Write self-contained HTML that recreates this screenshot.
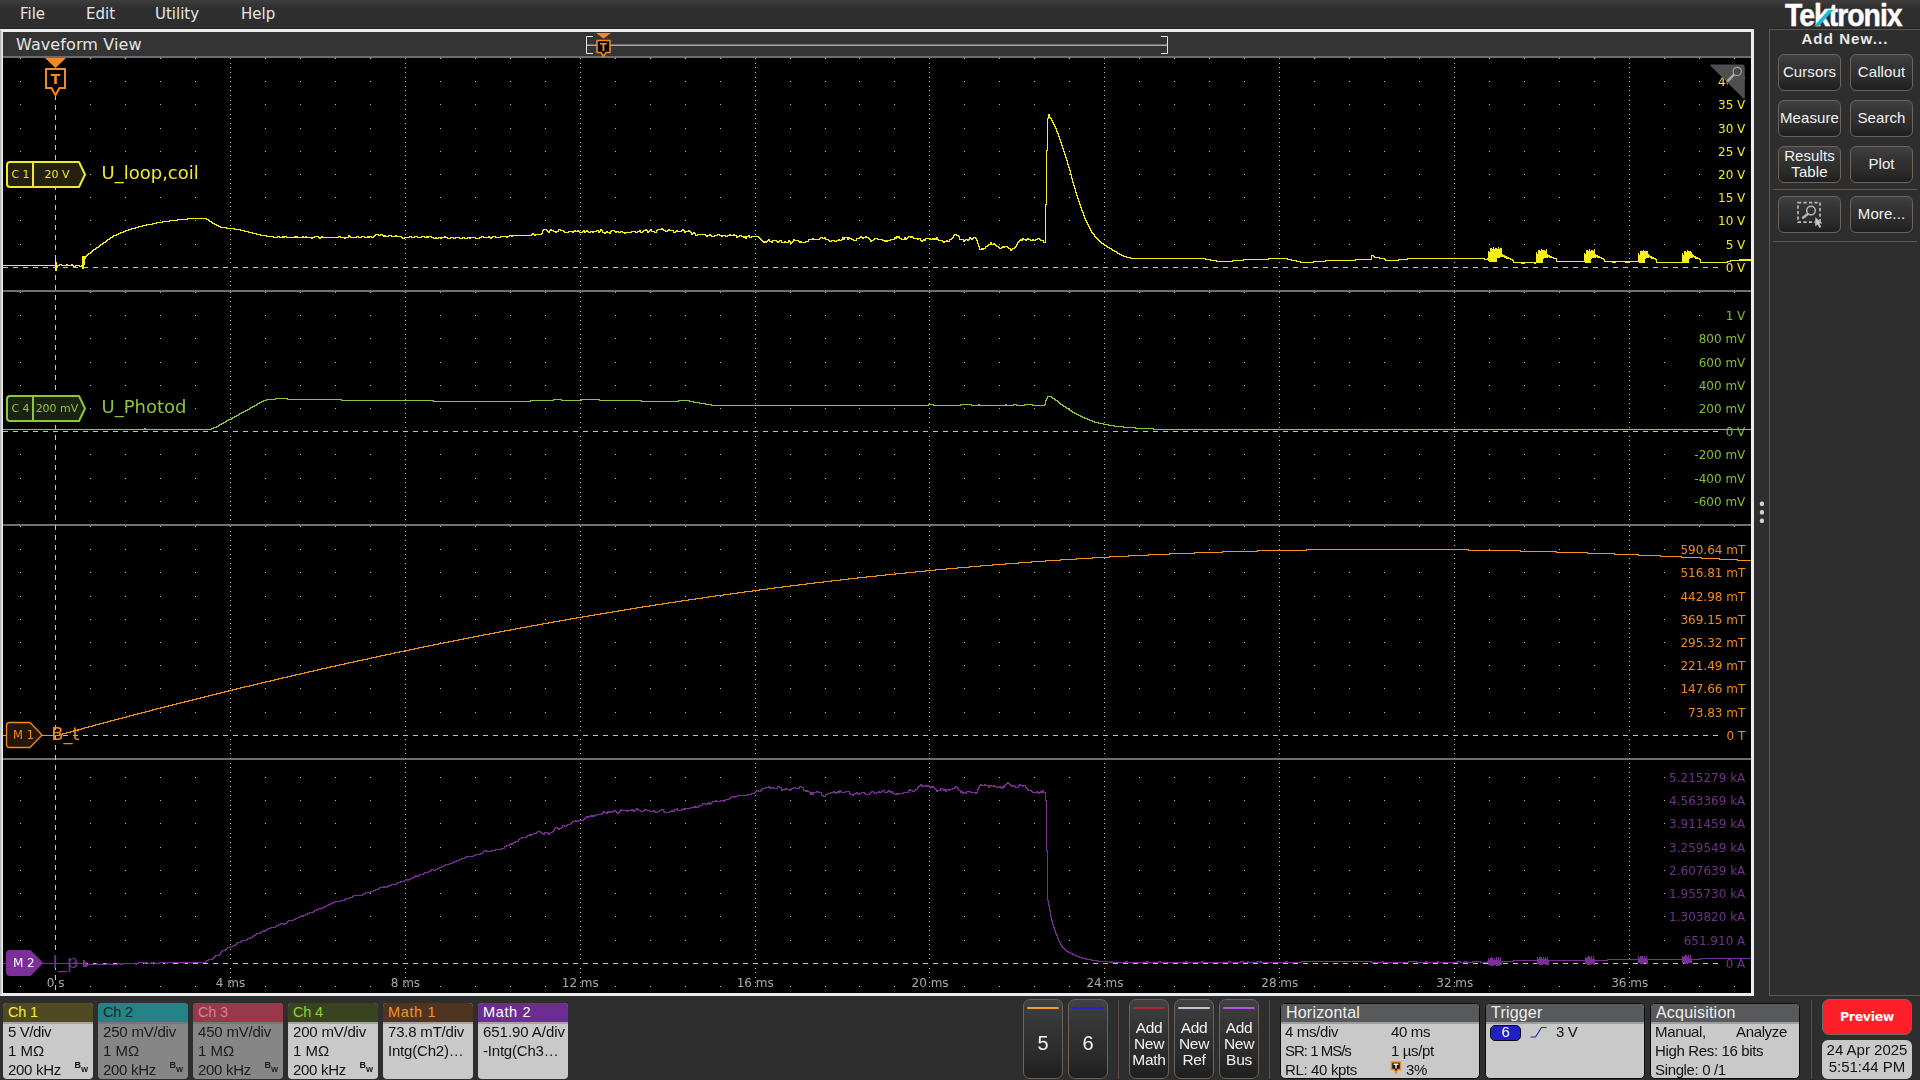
<!DOCTYPE html><html lang="en"><head><meta charset="utf-8"><title>Waveform View</title><style>
*{box-sizing:border-box;margin:0;padding:0}
html,body{width:1920px;height:1080px;overflow:hidden;background:#2e2e2e}
body{position:relative;font-family:"Liberation Sans",sans-serif;color:#e8e8e8;-webkit-font-smoothing:antialiased}
.abs{position:absolute}
.dv{font-family:"DejaVu Sans","Liberation Sans",sans-serif}
#menu span{position:absolute;top:4px;font:15px/20px "DejaVu Sans","Liberation Sans",sans-serif;color:#e6e6e6;white-space:nowrap}
#frame{position:absolute;left:0;top:29px;width:1754px;height:967px;background:#000;border:3px solid #ebecee;border-left-color:#d0d0d2}
#title{position:absolute;left:3px;top:32px;width:1748px;height:24px;background:#343434}
#titleline{position:absolute;left:3px;top:56px;width:1748px;height:2px;background:#6b6d70}
#title span{position:absolute;left:13px;top:2px;font:16px/22px "DejaVu Sans","Liberation Sans",sans-serif;letter-spacing:.1px;color:#e4e4e4;white-space:nowrap}
svg{position:absolute;left:0;top:0;will-change:transform}
svg text{font-family:"DejaVu Sans","Liberation Sans",sans-serif}
.btn{position:absolute;border:1px solid #6a625b;border-radius:6px;background:linear-gradient(#414143 0%,#353536 30%,#2b2b2b 70%,#1f1f1f 100%);color:#f2f2f2;text-align:center;white-space:nowrap}
.rb{width:63px;height:37px;font:15px/34px "Liberation Sans",sans-serif;letter-spacing:.1px}
.sep{position:absolute;height:1px;background:#5f5852}
.vsep{position:absolute;width:1px;background:#5a5049;top:1000px;height:79px}
.badge{position:absolute;top:1003px;width:90px;height:76px;border-radius:4px;overflow:hidden;background:#c9c9c9;color:#111;font:15px/19px "Liberation Sans",sans-serif;letter-spacing:-.4px;white-space:nowrap}
.badge .hd{position:absolute;left:0;top:0;width:100%;height:19px;font:14.5px/18px "Liberation Sans",sans-serif;letter-spacing:-.2px;padding-left:5px}
.badge .ln{position:absolute;left:0;top:19px;width:100%;height:1.6px;background:#a4a4a4}
.badge p{position:absolute;left:5px}
.badge.off{background:#868686;color:#1c1c1c}
.badge.off .ln{background:#777}
.bw{position:absolute;left:71.5px;top:57px;font:bold 9px/10px "Liberation Sans",sans-serif;letter-spacing:0}
.bw sub{font-size:7.5px;vertical-align:-3.5px}
.box{position:absolute;top:1003px;height:76px;border:1px solid #0c0c0c;border-radius:5px;overflow:hidden;background:#c9c9c9;color:#111;font:15px/19px "Liberation Sans",sans-serif;letter-spacing:-.35px;white-space:nowrap}
.box .hd{position:absolute;left:0;top:0;width:100%;height:20px;border-bottom:2px solid #9d9d9d;background:#58595b;color:#f0f0f0;font:16px/18px "Liberation Sans",sans-serif;letter-spacing:.2px;padding-left:5px}
.box p{position:absolute}
.tall{top:999px;height:80px;width:40px;border-radius:7px}
.tall i{position:absolute;left:3px;top:6.6px;width:32px;height:2.6px;border-radius:1px}
.tall b{position:absolute;left:0;width:100%;font-weight:normal}
</style></head><body><div class="abs" style="left:0;top:0;width:1920px;height:29px;background:linear-gradient(#3d3d3d,#2e2e2e 9px)"></div><div class="abs" style="left:0;top:28px;width:1755px;height:1px;background:#242424"></div><div class="abs" style="left:1769px;top:28px;width:151px;height:1px;background:#262626"></div><div id="menu"><span style="left:20px">File</span><span style="left:86px">Edit</span><span style="left:155px">Utility</span><span style="left:241px">Help</span></div><div class="abs" id="logo" style="left:1785px;top:-3px;-webkit-text-stroke:.5px #fff;font:bold 31.5px/36px 'Liberation Sans',sans-serif;color:#fff;letter-spacing:-1.1px;white-space:nowrap;transform:scaleX(.9);transform-origin:0 0">Tektronix</div><div class="abs" style="left:1820.5px;top:9.5px;width:5.4px;height:16.4px;background:#1fb9da;transform:skewX(-42deg)"></div><div id="frame"></div><div class="abs" style="left:0;top:31px;width:3px;height:963px;background:linear-gradient(90deg,#a9a9ad,#d6d6d9 50%,#f3f4f6)"></div><div id="title"><span>Waveform View</span></div><div id="titleline"></div><div class="abs" style="left:1769px;top:29px;width:160px;height:967px;border:1px solid #5f5852;border-left-color:#58595b;background:#2e2e2e"></div><div class="abs" style="left:1770px;top:30px;width:150px;text-align:center;font:bold 15px/18px 'Liberation Sans',sans-serif;letter-spacing:1.1px;color:#e9e9ec">Add New...</div><div class="btn rb" style="left:1778px;top:54px">Cursors</div><div class="btn rb" style="left:1850px;top:54px">Callout</div><div class="btn rb" style="left:1778px;top:100px">Measure</div><div class="btn rb" style="left:1850px;top:100px">Search</div><div class="btn rb" style="left:1850px;top:146px">Plot</div><div class="btn rb" style="left:1850px;top:196px">More...</div><div class="btn rb" style="left:1778px;top:146px;line-height:16px;padding-top:1px">Results<br>Table</div><div class="btn rb" style="left:1778px;top:196px"></div><div class="sep" style="left:1773px;top:189px;width:144px"></div><div class="sep" style="left:1773px;top:241px;width:144px"></div><svg width="1920" height="1080" viewBox="0 0 1920 1080" style="pointer-events:none"><rect x="1798" y="202.6" width="22" height="19.6" fill="none" stroke="#b9b9b9" stroke-width="1.7" stroke-dasharray="3.2 2.3"/><circle cx="1811" cy="210.6" r="4.3" fill="none" stroke="#b5b5b5" stroke-width="1.5"/><path d="M1807.8 214L1803 217.8" stroke="#b5b5b5" stroke-width="2.4" stroke-linecap="round"/><path d="M1815.3 217.2L1815.3 226.4L1817.6 224.4L1819.5 228L1821.2 227.1L1819.4 223.6L1822.6 223.5Z" fill="#c4c4c4"/></svg><div class="badge" style="left:3px"><div class="hd" style="background:#4f4a22;color:#f6f034">Ch 1</div><div class="ln"></div><p style="top:19px;letter-spacing:-0.4px">5 V/div</p><p style="top:38px;letter-spacing:0px">1 M&#937;</p><p style="top:57px;letter-spacing:-0.3px">200 kHz</p><span class="bw">B<sub>W</sub></span></div><div class="badge off" style="left:98px"><div class="hd" style="background:#248386;color:#0f2a2d">Ch 2</div><div class="ln"></div><p style="top:19px;letter-spacing:-0.2px">250 mV/div</p><p style="top:38px;letter-spacing:0px">1 M&#937;</p><p style="top:57px;letter-spacing:-0.3px">200 kHz</p><span class="bw">B<sub>W</sub></span></div><div class="badge off" style="left:193px"><div class="hd" style="background:#98394a;color:#cf8593">Ch 3</div><div class="ln"></div><p style="top:19px;letter-spacing:-0.2px">450 mV/div</p><p style="top:38px;letter-spacing:0px">1 M&#937;</p><p style="top:57px;letter-spacing:-0.3px">200 kHz</p><span class="bw">B<sub>W</sub></span></div><div class="badge" style="left:288px"><div class="hd" style="background:#38441f;color:#8fd030">Ch 4</div><div class="ln"></div><p style="top:19px;letter-spacing:-0.2px">200 mV/div</p><p style="top:38px;letter-spacing:0px">1 M&#937;</p><p style="top:57px;letter-spacing:-0.3px">200 kHz</p><span class="bw">B<sub>W</sub></span></div><div class="badge" style="left:383px"><div class="hd" style="background:#4f351f;color:#f59325;letter-spacing:.65px">Math 1</div><div class="ln"></div><p style="top:19px;letter-spacing:-0.2px">73.8 mT/div</p><p style="top:38px;letter-spacing:-0.2px">Intg(Ch2)&#8230;</p></div><div class="badge" style="left:478px"><div class="hd" style="background:#6c2d91;color:#ffffff;letter-spacing:.65px">Math 2</div><div class="ln"></div><p style="top:19px;letter-spacing:-0.05px">651.90 A/div</p><p style="top:38px;letter-spacing:-0.2px">-Intg(Ch3&#8230;</p></div><div class="btn tall" style="left:1023px"><i style="background:#f59a2a"></i><b style="top:30px;font:20px/26px 'Liberation Sans',sans-serif">5</b></div><div class="btn tall" style="left:1068px"><i style="background:#2424c8"></i><b style="top:30px;font:20px/26px 'Liberation Sans',sans-serif">6</b></div><div class="btn tall" style="left:1129px"><i style="background:#ae2433"></i><b style="top:20px;font:15.5px/16px 'Liberation Sans',sans-serif;letter-spacing:-.3px">Add<br>New<br>Math</b></div><div class="btn tall" style="left:1174px"><i style="background:#c3c3d2"></i><b style="top:20px;font:15.5px/16px 'Liberation Sans',sans-serif;letter-spacing:-.3px">Add<br>New<br>Ref</b></div><div class="btn tall" style="left:1219px"><i style="background:#b255e4"></i><b style="top:20px;font:15.5px/16px 'Liberation Sans',sans-serif;letter-spacing:-.3px">Add<br>New<br>Bus</b></div><div class="vsep" style="left:1118px"></div><div class="vsep" style="left:1269px"></div><div class="vsep" style="left:1811px"></div><div class="box" style="left:1280px;width:200px"><div class="hd">Horizontal</div><p style="left:4px;top:17.8px">4 ms/div</p><p style="left:110px;top:17.8px">40 ms</p><p style="left:4px;top:36.8px;letter-spacing:-1px">SR: 1 MS/s</p><p style="left:110px;top:36.8px">1 &#181;s/pt</p><p style="left:4px;top:56.2px">RL: 40 kpts</p><p style="left:125px;top:56.2px">3%</p><svg width="12" height="14" viewBox="0 0 12 14" style="left:109px;top:57px"><path d="M1.5 1H10.5V8.5H7.8L6 12L4.2 8.5H1.5Z" fill="#111" stroke="#f08a24" stroke-width="1.6"/><path d="M3.6 3.2H8.4M6 3.2V7.4" stroke="#fff" stroke-width="1.4"/></svg></div><div class="box" style="left:1485px;width:160px"><div class="hd">Trigger</div><div class="abs" style="left:4px;top:21px;width:31px;height:16px;border:1px solid #0a0a0a;border-radius:5px;background:#2121c2;color:#fff;text-align:center;font:15px/12px 'Liberation Sans',sans-serif">6</div><svg width="20" height="14" viewBox="0 0 20 14" style="left:44px;top:22px"><path d="M0.5 11H5.5L11.5 1.5H16.5" fill="none" stroke="#2a2aa8" stroke-width="1.2"/></svg><p style="left:70px;top:17.8px">3 V</p></div><div class="box" style="left:1650px;width:150px"><div class="hd">Acquisition</div><p style="left:4px;top:17.8px">Manual,</p><p style="left:85px;top:17.8px">Analyze</p><p style="left:4px;top:36.8px">High Res: 16 bits</p><p style="left:4px;top:56.2px">Single: 0 /1</p></div><div class="abs" style="left:1822px;top:999px;width:90px;height:36px;border:1px solid #6b6b6b;border-radius:7px;background:#ff1f28;color:#fff;text-align:center;font:bold 12.5px/33px 'DejaVu Sans','Liberation Sans',sans-serif;letter-spacing:-.3px">Preview</div><div class="abs" style="left:1822px;top:1040px;width:90px;height:39px;border-radius:6px;background:#c9c9c9;color:#111;text-align:center;font:15px/17px 'Liberation Sans',sans-serif;padding-top:1px;white-space:nowrap">24 Apr 2025<br>5:51:44 PM</div><svg width="1920" height="1080" viewBox="0 0 1920 1080"><path d="M20 58.5h1M90 58.5h1M125 58.5h1M160 58.5h1M195 58.5h1M230 58.5h1M265 58.5h1M300 58.5h1M335 58.5h1M370 58.5h1M405 58.5h1M440 58.5h1M475 58.5h1M510 58.5h1M545 58.5h1M580 58.5h1M615 58.5h1M650 58.5h1M685 58.5h1M720 58.5h1M755 58.5h1M790 58.5h1M825 58.5h1M859 58.5h1M894 58.5h1M929 58.5h1M964 58.5h1M999 58.5h1M1034 58.5h1M1069 58.5h1M1104 58.5h1M1139 58.5h1M1174 58.5h1M1209 58.5h1M1244 58.5h1M1279 58.5h1M1314 58.5h1M1349 58.5h1M1384 58.5h1M1419 58.5h1M1454 58.5h1M1489 58.5h1M1524 58.5h1M1559 58.5h1M1594 58.5h1M1629 58.5h1M1664 58.5h1M1699 58.5h1M1734 58.5h1M20 81.5h1M90 81.5h1M125 81.5h1M160 81.5h1M195 81.5h1M230 81.5h1M265 81.5h1M300 81.5h1M335 81.5h1M370 81.5h1M405 81.5h1M440 81.5h1M475 81.5h1M510 81.5h1M545 81.5h1M580 81.5h1M615 81.5h1M650 81.5h1M685 81.5h1M720 81.5h1M755 81.5h1M790 81.5h1M825 81.5h1M859 81.5h1M894 81.5h1M929 81.5h1M964 81.5h1M999 81.5h1M1034 81.5h1M1069 81.5h1M1104 81.5h1M1139 81.5h1M1174 81.5h1M1209 81.5h1M1244 81.5h1M1279 81.5h1M1314 81.5h1M1349 81.5h1M1384 81.5h1M1419 81.5h1M1454 81.5h1M1489 81.5h1M1524 81.5h1M1559 81.5h1M1594 81.5h1M1629 81.5h1M1664 81.5h1M1699 81.5h1M1734 81.5h1M20 104.5h1M90 104.5h1M125 104.5h1M160 104.5h1M195 104.5h1M230 104.5h1M265 104.5h1M300 104.5h1M335 104.5h1M370 104.5h1M405 104.5h1M440 104.5h1M475 104.5h1M510 104.5h1M545 104.5h1M580 104.5h1M615 104.5h1M650 104.5h1M685 104.5h1M720 104.5h1M755 104.5h1M790 104.5h1M825 104.5h1M859 104.5h1M894 104.5h1M929 104.5h1M964 104.5h1M999 104.5h1M1034 104.5h1M1069 104.5h1M1104 104.5h1M1139 104.5h1M1174 104.5h1M1209 104.5h1M1244 104.5h1M1279 104.5h1M1314 104.5h1M1349 104.5h1M1384 104.5h1M1419 104.5h1M1454 104.5h1M1489 104.5h1M1524 104.5h1M1559 104.5h1M1594 104.5h1M1629 104.5h1M1664 104.5h1M1699 104.5h1M1734 104.5h1M20 128.5h1M90 128.5h1M125 128.5h1M160 128.5h1M195 128.5h1M230 128.5h1M265 128.5h1M300 128.5h1M335 128.5h1M370 128.5h1M405 128.5h1M440 128.5h1M475 128.5h1M510 128.5h1M545 128.5h1M580 128.5h1M615 128.5h1M650 128.5h1M685 128.5h1M720 128.5h1M755 128.5h1M790 128.5h1M825 128.5h1M859 128.5h1M894 128.5h1M929 128.5h1M964 128.5h1M999 128.5h1M1034 128.5h1M1069 128.5h1M1104 128.5h1M1139 128.5h1M1174 128.5h1M1209 128.5h1M1244 128.5h1M1279 128.5h1M1314 128.5h1M1349 128.5h1M1384 128.5h1M1419 128.5h1M1454 128.5h1M1489 128.5h1M1524 128.5h1M1559 128.5h1M1594 128.5h1M1629 128.5h1M1664 128.5h1M1699 128.5h1M1734 128.5h1M20 151.5h1M90 151.5h1M125 151.5h1M160 151.5h1M195 151.5h1M230 151.5h1M265 151.5h1M300 151.5h1M335 151.5h1M370 151.5h1M405 151.5h1M440 151.5h1M475 151.5h1M510 151.5h1M545 151.5h1M580 151.5h1M615 151.5h1M650 151.5h1M685 151.5h1M720 151.5h1M755 151.5h1M790 151.5h1M825 151.5h1M859 151.5h1M894 151.5h1M929 151.5h1M964 151.5h1M999 151.5h1M1034 151.5h1M1069 151.5h1M1104 151.5h1M1139 151.5h1M1174 151.5h1M1209 151.5h1M1244 151.5h1M1279 151.5h1M1314 151.5h1M1349 151.5h1M1384 151.5h1M1419 151.5h1M1454 151.5h1M1489 151.5h1M1524 151.5h1M1559 151.5h1M1594 151.5h1M1629 151.5h1M1664 151.5h1M1699 151.5h1M1734 151.5h1M20 174.5h1M90 174.5h1M125 174.5h1M160 174.5h1M195 174.5h1M230 174.5h1M265 174.5h1M300 174.5h1M335 174.5h1M370 174.5h1M405 174.5h1M440 174.5h1M475 174.5h1M510 174.5h1M545 174.5h1M580 174.5h1M615 174.5h1M650 174.5h1M685 174.5h1M720 174.5h1M755 174.5h1M790 174.5h1M825 174.5h1M859 174.5h1M894 174.5h1M929 174.5h1M964 174.5h1M999 174.5h1M1034 174.5h1M1069 174.5h1M1104 174.5h1M1139 174.5h1M1174 174.5h1M1209 174.5h1M1244 174.5h1M1279 174.5h1M1314 174.5h1M1349 174.5h1M1384 174.5h1M1419 174.5h1M1454 174.5h1M1489 174.5h1M1524 174.5h1M1559 174.5h1M1594 174.5h1M1629 174.5h1M1664 174.5h1M1699 174.5h1M1734 174.5h1M20 197.5h1M90 197.5h1M125 197.5h1M160 197.5h1M195 197.5h1M230 197.5h1M265 197.5h1M300 197.5h1M335 197.5h1M370 197.5h1M405 197.5h1M440 197.5h1M475 197.5h1M510 197.5h1M545 197.5h1M580 197.5h1M615 197.5h1M650 197.5h1M685 197.5h1M720 197.5h1M755 197.5h1M790 197.5h1M825 197.5h1M859 197.5h1M894 197.5h1M929 197.5h1M964 197.5h1M999 197.5h1M1034 197.5h1M1069 197.5h1M1104 197.5h1M1139 197.5h1M1174 197.5h1M1209 197.5h1M1244 197.5h1M1279 197.5h1M1314 197.5h1M1349 197.5h1M1384 197.5h1M1419 197.5h1M1454 197.5h1M1489 197.5h1M1524 197.5h1M1559 197.5h1M1594 197.5h1M1629 197.5h1M1664 197.5h1M1699 197.5h1M1734 197.5h1M20 220.5h1M90 220.5h1M125 220.5h1M160 220.5h1M195 220.5h1M230 220.5h1M265 220.5h1M300 220.5h1M335 220.5h1M370 220.5h1M405 220.5h1M440 220.5h1M475 220.5h1M510 220.5h1M545 220.5h1M580 220.5h1M615 220.5h1M650 220.5h1M685 220.5h1M720 220.5h1M755 220.5h1M790 220.5h1M825 220.5h1M859 220.5h1M894 220.5h1M929 220.5h1M964 220.5h1M999 220.5h1M1034 220.5h1M1069 220.5h1M1104 220.5h1M1139 220.5h1M1174 220.5h1M1209 220.5h1M1244 220.5h1M1279 220.5h1M1314 220.5h1M1349 220.5h1M1384 220.5h1M1419 220.5h1M1454 220.5h1M1489 220.5h1M1524 220.5h1M1559 220.5h1M1594 220.5h1M1629 220.5h1M1664 220.5h1M1699 220.5h1M1734 220.5h1M20 244.5h1M90 244.5h1M125 244.5h1M160 244.5h1M195 244.5h1M230 244.5h1M265 244.5h1M300 244.5h1M335 244.5h1M370 244.5h1M405 244.5h1M440 244.5h1M475 244.5h1M510 244.5h1M545 244.5h1M580 244.5h1M615 244.5h1M650 244.5h1M685 244.5h1M720 244.5h1M755 244.5h1M790 244.5h1M825 244.5h1M859 244.5h1M894 244.5h1M929 244.5h1M964 244.5h1M999 244.5h1M1034 244.5h1M1069 244.5h1M1104 244.5h1M1139 244.5h1M1174 244.5h1M1209 244.5h1M1244 244.5h1M1279 244.5h1M1314 244.5h1M1349 244.5h1M1384 244.5h1M1419 244.5h1M1454 244.5h1M1489 244.5h1M1524 244.5h1M1559 244.5h1M1594 244.5h1M1629 244.5h1M1664 244.5h1M1699 244.5h1M1734 244.5h1M230 63.5h1M230 67.5h1M230 72.5h1M230 77.5h1M230 86.5h1M230 90.5h1M230 95.5h1M230 100.5h1M230 109.5h1M230 114.5h1M230 118.5h1M230 123.5h1M230 132.5h1M230 137.5h1M230 142.5h1M230 146.5h1M230 155.5h1M230 160.5h1M230 165.5h1M230 169.5h1M230 179.5h1M230 183.5h1M230 188.5h1M230 193.5h1M230 202.5h1M230 206.5h1M230 211.5h1M230 216.5h1M230 225.5h1M230 230.5h1M230 234.5h1M230 239.5h1M230 248.5h1M230 253.5h1M230 258.5h1M230 262.5h1M230 271.5h1M230 276.5h1M230 281.5h1M230 285.5h1M405 63.5h1M405 67.5h1M405 72.5h1M405 77.5h1M405 86.5h1M405 90.5h1M405 95.5h1M405 100.5h1M405 109.5h1M405 114.5h1M405 118.5h1M405 123.5h1M405 132.5h1M405 137.5h1M405 142.5h1M405 146.5h1M405 155.5h1M405 160.5h1M405 165.5h1M405 169.5h1M405 179.5h1M405 183.5h1M405 188.5h1M405 193.5h1M405 202.5h1M405 206.5h1M405 211.5h1M405 216.5h1M405 225.5h1M405 230.5h1M405 234.5h1M405 239.5h1M405 248.5h1M405 253.5h1M405 258.5h1M405 262.5h1M405 271.5h1M405 276.5h1M405 281.5h1M405 285.5h1M580 63.5h1M580 67.5h1M580 72.5h1M580 77.5h1M580 86.5h1M580 90.5h1M580 95.5h1M580 100.5h1M580 109.5h1M580 114.5h1M580 118.5h1M580 123.5h1M580 132.5h1M580 137.5h1M580 142.5h1M580 146.5h1M580 155.5h1M580 160.5h1M580 165.5h1M580 169.5h1M580 179.5h1M580 183.5h1M580 188.5h1M580 193.5h1M580 202.5h1M580 206.5h1M580 211.5h1M580 216.5h1M580 225.5h1M580 230.5h1M580 234.5h1M580 239.5h1M580 248.5h1M580 253.5h1M580 258.5h1M580 262.5h1M580 271.5h1M580 276.5h1M580 281.5h1M580 285.5h1M755 63.5h1M755 67.5h1M755 72.5h1M755 77.5h1M755 86.5h1M755 90.5h1M755 95.5h1M755 100.5h1M755 109.5h1M755 114.5h1M755 118.5h1M755 123.5h1M755 132.5h1M755 137.5h1M755 142.5h1M755 146.5h1M755 155.5h1M755 160.5h1M755 165.5h1M755 169.5h1M755 179.5h1M755 183.5h1M755 188.5h1M755 193.5h1M755 202.5h1M755 206.5h1M755 211.5h1M755 216.5h1M755 225.5h1M755 230.5h1M755 234.5h1M755 239.5h1M755 248.5h1M755 253.5h1M755 258.5h1M755 262.5h1M755 271.5h1M755 276.5h1M755 281.5h1M755 285.5h1M929 63.5h1M929 67.5h1M929 72.5h1M929 77.5h1M929 86.5h1M929 90.5h1M929 95.5h1M929 100.5h1M929 109.5h1M929 114.5h1M929 118.5h1M929 123.5h1M929 132.5h1M929 137.5h1M929 142.5h1M929 146.5h1M929 155.5h1M929 160.5h1M929 165.5h1M929 169.5h1M929 179.5h1M929 183.5h1M929 188.5h1M929 193.5h1M929 202.5h1M929 206.5h1M929 211.5h1M929 216.5h1M929 225.5h1M929 230.5h1M929 234.5h1M929 239.5h1M929 248.5h1M929 253.5h1M929 258.5h1M929 262.5h1M929 271.5h1M929 276.5h1M929 281.5h1M929 285.5h1M1104 63.5h1M1104 67.5h1M1104 72.5h1M1104 77.5h1M1104 86.5h1M1104 90.5h1M1104 95.5h1M1104 100.5h1M1104 109.5h1M1104 114.5h1M1104 118.5h1M1104 123.5h1M1104 132.5h1M1104 137.5h1M1104 142.5h1M1104 146.5h1M1104 155.5h1M1104 160.5h1M1104 165.5h1M1104 169.5h1M1104 179.5h1M1104 183.5h1M1104 188.5h1M1104 193.5h1M1104 202.5h1M1104 206.5h1M1104 211.5h1M1104 216.5h1M1104 225.5h1M1104 230.5h1M1104 234.5h1M1104 239.5h1M1104 248.5h1M1104 253.5h1M1104 258.5h1M1104 262.5h1M1104 271.5h1M1104 276.5h1M1104 281.5h1M1104 285.5h1M1279 63.5h1M1279 67.5h1M1279 72.5h1M1279 77.5h1M1279 86.5h1M1279 90.5h1M1279 95.5h1M1279 100.5h1M1279 109.5h1M1279 114.5h1M1279 118.5h1M1279 123.5h1M1279 132.5h1M1279 137.5h1M1279 142.5h1M1279 146.5h1M1279 155.5h1M1279 160.5h1M1279 165.5h1M1279 169.5h1M1279 179.5h1M1279 183.5h1M1279 188.5h1M1279 193.5h1M1279 202.5h1M1279 206.5h1M1279 211.5h1M1279 216.5h1M1279 225.5h1M1279 230.5h1M1279 234.5h1M1279 239.5h1M1279 248.5h1M1279 253.5h1M1279 258.5h1M1279 262.5h1M1279 271.5h1M1279 276.5h1M1279 281.5h1M1279 285.5h1M1454 63.5h1M1454 67.5h1M1454 72.5h1M1454 77.5h1M1454 86.5h1M1454 90.5h1M1454 95.5h1M1454 100.5h1M1454 109.5h1M1454 114.5h1M1454 118.5h1M1454 123.5h1M1454 132.5h1M1454 137.5h1M1454 142.5h1M1454 146.5h1M1454 155.5h1M1454 160.5h1M1454 165.5h1M1454 169.5h1M1454 179.5h1M1454 183.5h1M1454 188.5h1M1454 193.5h1M1454 202.5h1M1454 206.5h1M1454 211.5h1M1454 216.5h1M1454 225.5h1M1454 230.5h1M1454 234.5h1M1454 239.5h1M1454 248.5h1M1454 253.5h1M1454 258.5h1M1454 262.5h1M1454 271.5h1M1454 276.5h1M1454 281.5h1M1454 285.5h1M1629 63.5h1M1629 67.5h1M1629 72.5h1M1629 77.5h1M1629 86.5h1M1629 90.5h1M1629 95.5h1M1629 100.5h1M1629 109.5h1M1629 114.5h1M1629 118.5h1M1629 123.5h1M1629 132.5h1M1629 137.5h1M1629 142.5h1M1629 146.5h1M1629 155.5h1M1629 160.5h1M1629 165.5h1M1629 169.5h1M1629 179.5h1M1629 183.5h1M1629 188.5h1M1629 193.5h1M1629 202.5h1M1629 206.5h1M1629 211.5h1M1629 216.5h1M1629 225.5h1M1629 230.5h1M1629 234.5h1M1629 239.5h1M1629 248.5h1M1629 253.5h1M1629 258.5h1M1629 262.5h1M1629 271.5h1M1629 276.5h1M1629 281.5h1M1629 285.5h1M20 292.5h1M90 292.5h1M125 292.5h1M160 292.5h1M195 292.5h1M230 292.5h1M265 292.5h1M300 292.5h1M335 292.5h1M370 292.5h1M405 292.5h1M440 292.5h1M475 292.5h1M510 292.5h1M545 292.5h1M580 292.5h1M615 292.5h1M650 292.5h1M685 292.5h1M720 292.5h1M755 292.5h1M790 292.5h1M825 292.5h1M859 292.5h1M894 292.5h1M929 292.5h1M964 292.5h1M999 292.5h1M1034 292.5h1M1069 292.5h1M1104 292.5h1M1139 292.5h1M1174 292.5h1M1209 292.5h1M1244 292.5h1M1279 292.5h1M1314 292.5h1M1349 292.5h1M1384 292.5h1M1419 292.5h1M1454 292.5h1M1489 292.5h1M1524 292.5h1M1559 292.5h1M1594 292.5h1M1629 292.5h1M1664 292.5h1M1699 292.5h1M1734 292.5h1M20 315.5h1M90 315.5h1M125 315.5h1M160 315.5h1M195 315.5h1M230 315.5h1M265 315.5h1M300 315.5h1M335 315.5h1M370 315.5h1M405 315.5h1M440 315.5h1M475 315.5h1M510 315.5h1M545 315.5h1M580 315.5h1M615 315.5h1M650 315.5h1M685 315.5h1M720 315.5h1M755 315.5h1M790 315.5h1M825 315.5h1M859 315.5h1M894 315.5h1M929 315.5h1M964 315.5h1M999 315.5h1M1034 315.5h1M1069 315.5h1M1104 315.5h1M1139 315.5h1M1174 315.5h1M1209 315.5h1M1244 315.5h1M1279 315.5h1M1314 315.5h1M1349 315.5h1M1384 315.5h1M1419 315.5h1M1454 315.5h1M1489 315.5h1M1524 315.5h1M1559 315.5h1M1594 315.5h1M1629 315.5h1M1664 315.5h1M1699 315.5h1M1734 315.5h1M20 338.5h1M90 338.5h1M125 338.5h1M160 338.5h1M195 338.5h1M230 338.5h1M265 338.5h1M300 338.5h1M335 338.5h1M370 338.5h1M405 338.5h1M440 338.5h1M475 338.5h1M510 338.5h1M545 338.5h1M580 338.5h1M615 338.5h1M650 338.5h1M685 338.5h1M720 338.5h1M755 338.5h1M790 338.5h1M825 338.5h1M859 338.5h1M894 338.5h1M929 338.5h1M964 338.5h1M999 338.5h1M1034 338.5h1M1069 338.5h1M1104 338.5h1M1139 338.5h1M1174 338.5h1M1209 338.5h1M1244 338.5h1M1279 338.5h1M1314 338.5h1M1349 338.5h1M1384 338.5h1M1419 338.5h1M1454 338.5h1M1489 338.5h1M1524 338.5h1M1559 338.5h1M1594 338.5h1M1629 338.5h1M1664 338.5h1M1699 338.5h1M1734 338.5h1M20 362.5h1M90 362.5h1M125 362.5h1M160 362.5h1M195 362.5h1M230 362.5h1M265 362.5h1M300 362.5h1M335 362.5h1M370 362.5h1M405 362.5h1M440 362.5h1M475 362.5h1M510 362.5h1M545 362.5h1M580 362.5h1M615 362.5h1M650 362.5h1M685 362.5h1M720 362.5h1M755 362.5h1M790 362.5h1M825 362.5h1M859 362.5h1M894 362.5h1M929 362.5h1M964 362.5h1M999 362.5h1M1034 362.5h1M1069 362.5h1M1104 362.5h1M1139 362.5h1M1174 362.5h1M1209 362.5h1M1244 362.5h1M1279 362.5h1M1314 362.5h1M1349 362.5h1M1384 362.5h1M1419 362.5h1M1454 362.5h1M1489 362.5h1M1524 362.5h1M1559 362.5h1M1594 362.5h1M1629 362.5h1M1664 362.5h1M1699 362.5h1M1734 362.5h1M20 385.5h1M90 385.5h1M125 385.5h1M160 385.5h1M195 385.5h1M230 385.5h1M265 385.5h1M300 385.5h1M335 385.5h1M370 385.5h1M405 385.5h1M440 385.5h1M475 385.5h1M510 385.5h1M545 385.5h1M580 385.5h1M615 385.5h1M650 385.5h1M685 385.5h1M720 385.5h1M755 385.5h1M790 385.5h1M825 385.5h1M859 385.5h1M894 385.5h1M929 385.5h1M964 385.5h1M999 385.5h1M1034 385.5h1M1069 385.5h1M1104 385.5h1M1139 385.5h1M1174 385.5h1M1209 385.5h1M1244 385.5h1M1279 385.5h1M1314 385.5h1M1349 385.5h1M1384 385.5h1M1419 385.5h1M1454 385.5h1M1489 385.5h1M1524 385.5h1M1559 385.5h1M1594 385.5h1M1629 385.5h1M1664 385.5h1M1699 385.5h1M1734 385.5h1M20 408.5h1M90 408.5h1M125 408.5h1M160 408.5h1M195 408.5h1M230 408.5h1M265 408.5h1M300 408.5h1M335 408.5h1M370 408.5h1M405 408.5h1M440 408.5h1M475 408.5h1M510 408.5h1M545 408.5h1M580 408.5h1M615 408.5h1M650 408.5h1M685 408.5h1M720 408.5h1M755 408.5h1M790 408.5h1M825 408.5h1M859 408.5h1M894 408.5h1M929 408.5h1M964 408.5h1M999 408.5h1M1034 408.5h1M1069 408.5h1M1104 408.5h1M1139 408.5h1M1174 408.5h1M1209 408.5h1M1244 408.5h1M1279 408.5h1M1314 408.5h1M1349 408.5h1M1384 408.5h1M1419 408.5h1M1454 408.5h1M1489 408.5h1M1524 408.5h1M1559 408.5h1M1594 408.5h1M1629 408.5h1M1664 408.5h1M1699 408.5h1M1734 408.5h1M20 454.5h1M90 454.5h1M125 454.5h1M160 454.5h1M195 454.5h1M230 454.5h1M265 454.5h1M300 454.5h1M335 454.5h1M370 454.5h1M405 454.5h1M440 454.5h1M475 454.5h1M510 454.5h1M545 454.5h1M580 454.5h1M615 454.5h1M650 454.5h1M685 454.5h1M720 454.5h1M755 454.5h1M790 454.5h1M825 454.5h1M859 454.5h1M894 454.5h1M929 454.5h1M964 454.5h1M999 454.5h1M1034 454.5h1M1069 454.5h1M1104 454.5h1M1139 454.5h1M1174 454.5h1M1209 454.5h1M1244 454.5h1M1279 454.5h1M1314 454.5h1M1349 454.5h1M1384 454.5h1M1419 454.5h1M1454 454.5h1M1489 454.5h1M1524 454.5h1M1559 454.5h1M1594 454.5h1M1629 454.5h1M1664 454.5h1M1699 454.5h1M1734 454.5h1M20 478.5h1M90 478.5h1M125 478.5h1M160 478.5h1M195 478.5h1M230 478.5h1M265 478.5h1M300 478.5h1M335 478.5h1M370 478.5h1M405 478.5h1M440 478.5h1M475 478.5h1M510 478.5h1M545 478.5h1M580 478.5h1M615 478.5h1M650 478.5h1M685 478.5h1M720 478.5h1M755 478.5h1M790 478.5h1M825 478.5h1M859 478.5h1M894 478.5h1M929 478.5h1M964 478.5h1M999 478.5h1M1034 478.5h1M1069 478.5h1M1104 478.5h1M1139 478.5h1M1174 478.5h1M1209 478.5h1M1244 478.5h1M1279 478.5h1M1314 478.5h1M1349 478.5h1M1384 478.5h1M1419 478.5h1M1454 478.5h1M1489 478.5h1M1524 478.5h1M1559 478.5h1M1594 478.5h1M1629 478.5h1M1664 478.5h1M1699 478.5h1M1734 478.5h1M20 501.5h1M90 501.5h1M125 501.5h1M160 501.5h1M195 501.5h1M230 501.5h1M265 501.5h1M300 501.5h1M335 501.5h1M370 501.5h1M405 501.5h1M440 501.5h1M475 501.5h1M510 501.5h1M545 501.5h1M580 501.5h1M615 501.5h1M650 501.5h1M685 501.5h1M720 501.5h1M755 501.5h1M790 501.5h1M825 501.5h1M859 501.5h1M894 501.5h1M929 501.5h1M964 501.5h1M999 501.5h1M1034 501.5h1M1069 501.5h1M1104 501.5h1M1139 501.5h1M1174 501.5h1M1209 501.5h1M1244 501.5h1M1279 501.5h1M1314 501.5h1M1349 501.5h1M1384 501.5h1M1419 501.5h1M1454 501.5h1M1489 501.5h1M1524 501.5h1M1559 501.5h1M1594 501.5h1M1629 501.5h1M1664 501.5h1M1699 501.5h1M1734 501.5h1M230 297.5h1M230 301.5h1M230 306.5h1M230 311.5h1M230 320.5h1M230 324.5h1M230 329.5h1M230 334.5h1M230 343.5h1M230 348.5h1M230 352.5h1M230 357.5h1M230 366.5h1M230 371.5h1M230 376.5h1M230 380.5h1M230 389.5h1M230 394.5h1M230 399.5h1M230 403.5h1M230 413.5h1M230 417.5h1M230 422.5h1M230 427.5h1M230 436.5h1M230 440.5h1M230 445.5h1M230 450.5h1M230 459.5h1M230 464.5h1M230 468.5h1M230 473.5h1M230 482.5h1M230 487.5h1M230 492.5h1M230 496.5h1M230 505.5h1M230 510.5h1M230 515.5h1M230 519.5h1M405 297.5h1M405 301.5h1M405 306.5h1M405 311.5h1M405 320.5h1M405 324.5h1M405 329.5h1M405 334.5h1M405 343.5h1M405 348.5h1M405 352.5h1M405 357.5h1M405 366.5h1M405 371.5h1M405 376.5h1M405 380.5h1M405 389.5h1M405 394.5h1M405 399.5h1M405 403.5h1M405 413.5h1M405 417.5h1M405 422.5h1M405 427.5h1M405 436.5h1M405 440.5h1M405 445.5h1M405 450.5h1M405 459.5h1M405 464.5h1M405 468.5h1M405 473.5h1M405 482.5h1M405 487.5h1M405 492.5h1M405 496.5h1M405 505.5h1M405 510.5h1M405 515.5h1M405 519.5h1M580 297.5h1M580 301.5h1M580 306.5h1M580 311.5h1M580 320.5h1M580 324.5h1M580 329.5h1M580 334.5h1M580 343.5h1M580 348.5h1M580 352.5h1M580 357.5h1M580 366.5h1M580 371.5h1M580 376.5h1M580 380.5h1M580 389.5h1M580 394.5h1M580 399.5h1M580 403.5h1M580 413.5h1M580 417.5h1M580 422.5h1M580 427.5h1M580 436.5h1M580 440.5h1M580 445.5h1M580 450.5h1M580 459.5h1M580 464.5h1M580 468.5h1M580 473.5h1M580 482.5h1M580 487.5h1M580 492.5h1M580 496.5h1M580 505.5h1M580 510.5h1M580 515.5h1M580 519.5h1M755 297.5h1M755 301.5h1M755 306.5h1M755 311.5h1M755 320.5h1M755 324.5h1M755 329.5h1M755 334.5h1M755 343.5h1M755 348.5h1M755 352.5h1M755 357.5h1M755 366.5h1M755 371.5h1M755 376.5h1M755 380.5h1M755 389.5h1M755 394.5h1M755 399.5h1M755 403.5h1M755 413.5h1M755 417.5h1M755 422.5h1M755 427.5h1M755 436.5h1M755 440.5h1M755 445.5h1M755 450.5h1M755 459.5h1M755 464.5h1M755 468.5h1M755 473.5h1M755 482.5h1M755 487.5h1M755 492.5h1M755 496.5h1M755 505.5h1M755 510.5h1M755 515.5h1M755 519.5h1M929 297.5h1M929 301.5h1M929 306.5h1M929 311.5h1M929 320.5h1M929 324.5h1M929 329.5h1M929 334.5h1M929 343.5h1M929 348.5h1M929 352.5h1M929 357.5h1M929 366.5h1M929 371.5h1M929 376.5h1M929 380.5h1M929 389.5h1M929 394.5h1M929 399.5h1M929 403.5h1M929 413.5h1M929 417.5h1M929 422.5h1M929 427.5h1M929 436.5h1M929 440.5h1M929 445.5h1M929 450.5h1M929 459.5h1M929 464.5h1M929 468.5h1M929 473.5h1M929 482.5h1M929 487.5h1M929 492.5h1M929 496.5h1M929 505.5h1M929 510.5h1M929 515.5h1M929 519.5h1M1104 297.5h1M1104 301.5h1M1104 306.5h1M1104 311.5h1M1104 320.5h1M1104 324.5h1M1104 329.5h1M1104 334.5h1M1104 343.5h1M1104 348.5h1M1104 352.5h1M1104 357.5h1M1104 366.5h1M1104 371.5h1M1104 376.5h1M1104 380.5h1M1104 389.5h1M1104 394.5h1M1104 399.5h1M1104 403.5h1M1104 413.5h1M1104 417.5h1M1104 422.5h1M1104 427.5h1M1104 436.5h1M1104 440.5h1M1104 445.5h1M1104 450.5h1M1104 459.5h1M1104 464.5h1M1104 468.5h1M1104 473.5h1M1104 482.5h1M1104 487.5h1M1104 492.5h1M1104 496.5h1M1104 505.5h1M1104 510.5h1M1104 515.5h1M1104 519.5h1M1279 297.5h1M1279 301.5h1M1279 306.5h1M1279 311.5h1M1279 320.5h1M1279 324.5h1M1279 329.5h1M1279 334.5h1M1279 343.5h1M1279 348.5h1M1279 352.5h1M1279 357.5h1M1279 366.5h1M1279 371.5h1M1279 376.5h1M1279 380.5h1M1279 389.5h1M1279 394.5h1M1279 399.5h1M1279 403.5h1M1279 413.5h1M1279 417.5h1M1279 422.5h1M1279 427.5h1M1279 436.5h1M1279 440.5h1M1279 445.5h1M1279 450.5h1M1279 459.5h1M1279 464.5h1M1279 468.5h1M1279 473.5h1M1279 482.5h1M1279 487.5h1M1279 492.5h1M1279 496.5h1M1279 505.5h1M1279 510.5h1M1279 515.5h1M1279 519.5h1M1454 297.5h1M1454 301.5h1M1454 306.5h1M1454 311.5h1M1454 320.5h1M1454 324.5h1M1454 329.5h1M1454 334.5h1M1454 343.5h1M1454 348.5h1M1454 352.5h1M1454 357.5h1M1454 366.5h1M1454 371.5h1M1454 376.5h1M1454 380.5h1M1454 389.5h1M1454 394.5h1M1454 399.5h1M1454 403.5h1M1454 413.5h1M1454 417.5h1M1454 422.5h1M1454 427.5h1M1454 436.5h1M1454 440.5h1M1454 445.5h1M1454 450.5h1M1454 459.5h1M1454 464.5h1M1454 468.5h1M1454 473.5h1M1454 482.5h1M1454 487.5h1M1454 492.5h1M1454 496.5h1M1454 505.5h1M1454 510.5h1M1454 515.5h1M1454 519.5h1M1629 297.5h1M1629 301.5h1M1629 306.5h1M1629 311.5h1M1629 320.5h1M1629 324.5h1M1629 329.5h1M1629 334.5h1M1629 343.5h1M1629 348.5h1M1629 352.5h1M1629 357.5h1M1629 366.5h1M1629 371.5h1M1629 376.5h1M1629 380.5h1M1629 389.5h1M1629 394.5h1M1629 399.5h1M1629 403.5h1M1629 413.5h1M1629 417.5h1M1629 422.5h1M1629 427.5h1M1629 436.5h1M1629 440.5h1M1629 445.5h1M1629 450.5h1M1629 459.5h1M1629 464.5h1M1629 468.5h1M1629 473.5h1M1629 482.5h1M1629 487.5h1M1629 492.5h1M1629 496.5h1M1629 505.5h1M1629 510.5h1M1629 515.5h1M1629 519.5h1M20 526.5h1M90 526.5h1M125 526.5h1M160 526.5h1M195 526.5h1M230 526.5h1M265 526.5h1M300 526.5h1M335 526.5h1M370 526.5h1M405 526.5h1M440 526.5h1M475 526.5h1M510 526.5h1M545 526.5h1M580 526.5h1M615 526.5h1M650 526.5h1M685 526.5h1M720 526.5h1M755 526.5h1M790 526.5h1M825 526.5h1M859 526.5h1M894 526.5h1M929 526.5h1M964 526.5h1M999 526.5h1M1034 526.5h1M1069 526.5h1M1104 526.5h1M1139 526.5h1M1174 526.5h1M1209 526.5h1M1244 526.5h1M1279 526.5h1M1314 526.5h1M1349 526.5h1M1384 526.5h1M1419 526.5h1M1454 526.5h1M1489 526.5h1M1524 526.5h1M1559 526.5h1M1594 526.5h1M1629 526.5h1M1664 526.5h1M1699 526.5h1M1734 526.5h1M20 549.5h1M90 549.5h1M125 549.5h1M160 549.5h1M195 549.5h1M230 549.5h1M265 549.5h1M300 549.5h1M335 549.5h1M370 549.5h1M405 549.5h1M440 549.5h1M475 549.5h1M510 549.5h1M545 549.5h1M580 549.5h1M615 549.5h1M650 549.5h1M685 549.5h1M720 549.5h1M755 549.5h1M790 549.5h1M825 549.5h1M859 549.5h1M894 549.5h1M929 549.5h1M964 549.5h1M999 549.5h1M1034 549.5h1M1069 549.5h1M1104 549.5h1M1139 549.5h1M1174 549.5h1M1209 549.5h1M1244 549.5h1M1279 549.5h1M1314 549.5h1M1349 549.5h1M1384 549.5h1M1419 549.5h1M1454 549.5h1M1489 549.5h1M1524 549.5h1M1559 549.5h1M1594 549.5h1M1629 549.5h1M1664 549.5h1M1699 549.5h1M1734 549.5h1M20 572.5h1M90 572.5h1M125 572.5h1M160 572.5h1M195 572.5h1M230 572.5h1M265 572.5h1M300 572.5h1M335 572.5h1M370 572.5h1M405 572.5h1M440 572.5h1M475 572.5h1M510 572.5h1M545 572.5h1M580 572.5h1M615 572.5h1M650 572.5h1M685 572.5h1M720 572.5h1M755 572.5h1M790 572.5h1M825 572.5h1M859 572.5h1M894 572.5h1M929 572.5h1M964 572.5h1M999 572.5h1M1034 572.5h1M1069 572.5h1M1104 572.5h1M1139 572.5h1M1174 572.5h1M1209 572.5h1M1244 572.5h1M1279 572.5h1M1314 572.5h1M1349 572.5h1M1384 572.5h1M1419 572.5h1M1454 572.5h1M1489 572.5h1M1524 572.5h1M1559 572.5h1M1594 572.5h1M1629 572.5h1M1664 572.5h1M1699 572.5h1M1734 572.5h1M20 596.5h1M90 596.5h1M125 596.5h1M160 596.5h1M195 596.5h1M230 596.5h1M265 596.5h1M300 596.5h1M335 596.5h1M370 596.5h1M405 596.5h1M440 596.5h1M475 596.5h1M510 596.5h1M545 596.5h1M580 596.5h1M615 596.5h1M650 596.5h1M685 596.5h1M720 596.5h1M755 596.5h1M790 596.5h1M825 596.5h1M859 596.5h1M894 596.5h1M929 596.5h1M964 596.5h1M999 596.5h1M1034 596.5h1M1069 596.5h1M1104 596.5h1M1139 596.5h1M1174 596.5h1M1209 596.5h1M1244 596.5h1M1279 596.5h1M1314 596.5h1M1349 596.5h1M1384 596.5h1M1419 596.5h1M1454 596.5h1M1489 596.5h1M1524 596.5h1M1559 596.5h1M1594 596.5h1M1629 596.5h1M1664 596.5h1M1699 596.5h1M1734 596.5h1M20 619.5h1M90 619.5h1M125 619.5h1M160 619.5h1M195 619.5h1M230 619.5h1M265 619.5h1M300 619.5h1M335 619.5h1M370 619.5h1M405 619.5h1M440 619.5h1M475 619.5h1M510 619.5h1M545 619.5h1M580 619.5h1M615 619.5h1M650 619.5h1M685 619.5h1M720 619.5h1M755 619.5h1M790 619.5h1M825 619.5h1M859 619.5h1M894 619.5h1M929 619.5h1M964 619.5h1M999 619.5h1M1034 619.5h1M1069 619.5h1M1104 619.5h1M1139 619.5h1M1174 619.5h1M1209 619.5h1M1244 619.5h1M1279 619.5h1M1314 619.5h1M1349 619.5h1M1384 619.5h1M1419 619.5h1M1454 619.5h1M1489 619.5h1M1524 619.5h1M1559 619.5h1M1594 619.5h1M1629 619.5h1M1664 619.5h1M1699 619.5h1M1734 619.5h1M20 642.5h1M90 642.5h1M125 642.5h1M160 642.5h1M195 642.5h1M230 642.5h1M265 642.5h1M300 642.5h1M335 642.5h1M370 642.5h1M405 642.5h1M440 642.5h1M475 642.5h1M510 642.5h1M545 642.5h1M580 642.5h1M615 642.5h1M650 642.5h1M685 642.5h1M720 642.5h1M755 642.5h1M790 642.5h1M825 642.5h1M859 642.5h1M894 642.5h1M929 642.5h1M964 642.5h1M999 642.5h1M1034 642.5h1M1069 642.5h1M1104 642.5h1M1139 642.5h1M1174 642.5h1M1209 642.5h1M1244 642.5h1M1279 642.5h1M1314 642.5h1M1349 642.5h1M1384 642.5h1M1419 642.5h1M1454 642.5h1M1489 642.5h1M1524 642.5h1M1559 642.5h1M1594 642.5h1M1629 642.5h1M1664 642.5h1M1699 642.5h1M1734 642.5h1M20 665.5h1M90 665.5h1M125 665.5h1M160 665.5h1M195 665.5h1M230 665.5h1M265 665.5h1M300 665.5h1M335 665.5h1M370 665.5h1M405 665.5h1M440 665.5h1M475 665.5h1M510 665.5h1M545 665.5h1M580 665.5h1M615 665.5h1M650 665.5h1M685 665.5h1M720 665.5h1M755 665.5h1M790 665.5h1M825 665.5h1M859 665.5h1M894 665.5h1M929 665.5h1M964 665.5h1M999 665.5h1M1034 665.5h1M1069 665.5h1M1104 665.5h1M1139 665.5h1M1174 665.5h1M1209 665.5h1M1244 665.5h1M1279 665.5h1M1314 665.5h1M1349 665.5h1M1384 665.5h1M1419 665.5h1M1454 665.5h1M1489 665.5h1M1524 665.5h1M1559 665.5h1M1594 665.5h1M1629 665.5h1M1664 665.5h1M1699 665.5h1M1734 665.5h1M20 688.5h1M90 688.5h1M125 688.5h1M160 688.5h1M195 688.5h1M230 688.5h1M265 688.5h1M300 688.5h1M335 688.5h1M370 688.5h1M405 688.5h1M440 688.5h1M475 688.5h1M510 688.5h1M545 688.5h1M580 688.5h1M615 688.5h1M650 688.5h1M685 688.5h1M720 688.5h1M755 688.5h1M790 688.5h1M825 688.5h1M859 688.5h1M894 688.5h1M929 688.5h1M964 688.5h1M999 688.5h1M1034 688.5h1M1069 688.5h1M1104 688.5h1M1139 688.5h1M1174 688.5h1M1209 688.5h1M1244 688.5h1M1279 688.5h1M1314 688.5h1M1349 688.5h1M1384 688.5h1M1419 688.5h1M1454 688.5h1M1489 688.5h1M1524 688.5h1M1559 688.5h1M1594 688.5h1M1629 688.5h1M1664 688.5h1M1699 688.5h1M1734 688.5h1M20 712.5h1M90 712.5h1M125 712.5h1M160 712.5h1M195 712.5h1M230 712.5h1M265 712.5h1M300 712.5h1M335 712.5h1M370 712.5h1M405 712.5h1M440 712.5h1M475 712.5h1M510 712.5h1M545 712.5h1M580 712.5h1M615 712.5h1M650 712.5h1M685 712.5h1M720 712.5h1M755 712.5h1M790 712.5h1M825 712.5h1M859 712.5h1M894 712.5h1M929 712.5h1M964 712.5h1M999 712.5h1M1034 712.5h1M1069 712.5h1M1104 712.5h1M1139 712.5h1M1174 712.5h1M1209 712.5h1M1244 712.5h1M1279 712.5h1M1314 712.5h1M1349 712.5h1M1384 712.5h1M1419 712.5h1M1454 712.5h1M1489 712.5h1M1524 712.5h1M1559 712.5h1M1594 712.5h1M1629 712.5h1M1664 712.5h1M1699 712.5h1M1734 712.5h1M230 531.5h1M230 535.5h1M230 540.5h1M230 545.5h1M230 554.5h1M230 558.5h1M230 563.5h1M230 568.5h1M230 577.5h1M230 582.5h1M230 586.5h1M230 591.5h1M230 600.5h1M230 605.5h1M230 610.5h1M230 614.5h1M230 623.5h1M230 628.5h1M230 633.5h1M230 637.5h1M230 647.5h1M230 651.5h1M230 656.5h1M230 661.5h1M230 670.5h1M230 674.5h1M230 679.5h1M230 684.5h1M230 693.5h1M230 698.5h1M230 702.5h1M230 707.5h1M230 716.5h1M230 721.5h1M230 726.5h1M230 730.5h1M230 739.5h1M230 744.5h1M230 749.5h1M230 753.5h1M405 531.5h1M405 535.5h1M405 540.5h1M405 545.5h1M405 554.5h1M405 558.5h1M405 563.5h1M405 568.5h1M405 577.5h1M405 582.5h1M405 586.5h1M405 591.5h1M405 600.5h1M405 605.5h1M405 610.5h1M405 614.5h1M405 623.5h1M405 628.5h1M405 633.5h1M405 637.5h1M405 647.5h1M405 651.5h1M405 656.5h1M405 661.5h1M405 670.5h1M405 674.5h1M405 679.5h1M405 684.5h1M405 693.5h1M405 698.5h1M405 702.5h1M405 707.5h1M405 716.5h1M405 721.5h1M405 726.5h1M405 730.5h1M405 739.5h1M405 744.5h1M405 749.5h1M405 753.5h1M580 531.5h1M580 535.5h1M580 540.5h1M580 545.5h1M580 554.5h1M580 558.5h1M580 563.5h1M580 568.5h1M580 577.5h1M580 582.5h1M580 586.5h1M580 591.5h1M580 600.5h1M580 605.5h1M580 610.5h1M580 614.5h1M580 623.5h1M580 628.5h1M580 633.5h1M580 637.5h1M580 647.5h1M580 651.5h1M580 656.5h1M580 661.5h1M580 670.5h1M580 674.5h1M580 679.5h1M580 684.5h1M580 693.5h1M580 698.5h1M580 702.5h1M580 707.5h1M580 716.5h1M580 721.5h1M580 726.5h1M580 730.5h1M580 739.5h1M580 744.5h1M580 749.5h1M580 753.5h1M755 531.5h1M755 535.5h1M755 540.5h1M755 545.5h1M755 554.5h1M755 558.5h1M755 563.5h1M755 568.5h1M755 577.5h1M755 582.5h1M755 586.5h1M755 591.5h1M755 600.5h1M755 605.5h1M755 610.5h1M755 614.5h1M755 623.5h1M755 628.5h1M755 633.5h1M755 637.5h1M755 647.5h1M755 651.5h1M755 656.5h1M755 661.5h1M755 670.5h1M755 674.5h1M755 679.5h1M755 684.5h1M755 693.5h1M755 698.5h1M755 702.5h1M755 707.5h1M755 716.5h1M755 721.5h1M755 726.5h1M755 730.5h1M755 739.5h1M755 744.5h1M755 749.5h1M755 753.5h1M929 531.5h1M929 535.5h1M929 540.5h1M929 545.5h1M929 554.5h1M929 558.5h1M929 563.5h1M929 568.5h1M929 577.5h1M929 582.5h1M929 586.5h1M929 591.5h1M929 600.5h1M929 605.5h1M929 610.5h1M929 614.5h1M929 623.5h1M929 628.5h1M929 633.5h1M929 637.5h1M929 647.5h1M929 651.5h1M929 656.5h1M929 661.5h1M929 670.5h1M929 674.5h1M929 679.5h1M929 684.5h1M929 693.5h1M929 698.5h1M929 702.5h1M929 707.5h1M929 716.5h1M929 721.5h1M929 726.5h1M929 730.5h1M929 739.5h1M929 744.5h1M929 749.5h1M929 753.5h1M1104 531.5h1M1104 535.5h1M1104 540.5h1M1104 545.5h1M1104 554.5h1M1104 558.5h1M1104 563.5h1M1104 568.5h1M1104 577.5h1M1104 582.5h1M1104 586.5h1M1104 591.5h1M1104 600.5h1M1104 605.5h1M1104 610.5h1M1104 614.5h1M1104 623.5h1M1104 628.5h1M1104 633.5h1M1104 637.5h1M1104 647.5h1M1104 651.5h1M1104 656.5h1M1104 661.5h1M1104 670.5h1M1104 674.5h1M1104 679.5h1M1104 684.5h1M1104 693.5h1M1104 698.5h1M1104 702.5h1M1104 707.5h1M1104 716.5h1M1104 721.5h1M1104 726.5h1M1104 730.5h1M1104 739.5h1M1104 744.5h1M1104 749.5h1M1104 753.5h1M1279 531.5h1M1279 535.5h1M1279 540.5h1M1279 545.5h1M1279 554.5h1M1279 558.5h1M1279 563.5h1M1279 568.5h1M1279 577.5h1M1279 582.5h1M1279 586.5h1M1279 591.5h1M1279 600.5h1M1279 605.5h1M1279 610.5h1M1279 614.5h1M1279 623.5h1M1279 628.5h1M1279 633.5h1M1279 637.5h1M1279 647.5h1M1279 651.5h1M1279 656.5h1M1279 661.5h1M1279 670.5h1M1279 674.5h1M1279 679.5h1M1279 684.5h1M1279 693.5h1M1279 698.5h1M1279 702.5h1M1279 707.5h1M1279 716.5h1M1279 721.5h1M1279 726.5h1M1279 730.5h1M1279 739.5h1M1279 744.5h1M1279 749.5h1M1279 753.5h1M1454 531.5h1M1454 535.5h1M1454 540.5h1M1454 545.5h1M1454 554.5h1M1454 558.5h1M1454 563.5h1M1454 568.5h1M1454 577.5h1M1454 582.5h1M1454 586.5h1M1454 591.5h1M1454 600.5h1M1454 605.5h1M1454 610.5h1M1454 614.5h1M1454 623.5h1M1454 628.5h1M1454 633.5h1M1454 637.5h1M1454 647.5h1M1454 651.5h1M1454 656.5h1M1454 661.5h1M1454 670.5h1M1454 674.5h1M1454 679.5h1M1454 684.5h1M1454 693.5h1M1454 698.5h1M1454 702.5h1M1454 707.5h1M1454 716.5h1M1454 721.5h1M1454 726.5h1M1454 730.5h1M1454 739.5h1M1454 744.5h1M1454 749.5h1M1454 753.5h1M1629 531.5h1M1629 535.5h1M1629 540.5h1M1629 545.5h1M1629 554.5h1M1629 558.5h1M1629 563.5h1M1629 568.5h1M1629 577.5h1M1629 582.5h1M1629 586.5h1M1629 591.5h1M1629 600.5h1M1629 605.5h1M1629 610.5h1M1629 614.5h1M1629 623.5h1M1629 628.5h1M1629 633.5h1M1629 637.5h1M1629 647.5h1M1629 651.5h1M1629 656.5h1M1629 661.5h1M1629 670.5h1M1629 674.5h1M1629 679.5h1M1629 684.5h1M1629 693.5h1M1629 698.5h1M1629 702.5h1M1629 707.5h1M1629 716.5h1M1629 721.5h1M1629 726.5h1M1629 730.5h1M1629 739.5h1M1629 744.5h1M1629 749.5h1M1629 753.5h1M20 777.5h1M90 777.5h1M125 777.5h1M160 777.5h1M195 777.5h1M230 777.5h1M265 777.5h1M300 777.5h1M335 777.5h1M370 777.5h1M405 777.5h1M440 777.5h1M475 777.5h1M510 777.5h1M545 777.5h1M580 777.5h1M615 777.5h1M650 777.5h1M685 777.5h1M720 777.5h1M755 777.5h1M790 777.5h1M825 777.5h1M859 777.5h1M894 777.5h1M929 777.5h1M964 777.5h1M999 777.5h1M1034 777.5h1M1069 777.5h1M1104 777.5h1M1139 777.5h1M1174 777.5h1M1209 777.5h1M1244 777.5h1M1279 777.5h1M1314 777.5h1M1349 777.5h1M1384 777.5h1M1419 777.5h1M1454 777.5h1M1489 777.5h1M1524 777.5h1M1559 777.5h1M1594 777.5h1M1629 777.5h1M1664 777.5h1M1699 777.5h1M1734 777.5h1M20 800.5h1M90 800.5h1M125 800.5h1M160 800.5h1M195 800.5h1M230 800.5h1M265 800.5h1M300 800.5h1M335 800.5h1M370 800.5h1M405 800.5h1M440 800.5h1M475 800.5h1M510 800.5h1M545 800.5h1M580 800.5h1M615 800.5h1M650 800.5h1M685 800.5h1M720 800.5h1M755 800.5h1M790 800.5h1M825 800.5h1M859 800.5h1M894 800.5h1M929 800.5h1M964 800.5h1M999 800.5h1M1034 800.5h1M1069 800.5h1M1104 800.5h1M1139 800.5h1M1174 800.5h1M1209 800.5h1M1244 800.5h1M1279 800.5h1M1314 800.5h1M1349 800.5h1M1384 800.5h1M1419 800.5h1M1454 800.5h1M1489 800.5h1M1524 800.5h1M1559 800.5h1M1594 800.5h1M1629 800.5h1M1664 800.5h1M1699 800.5h1M1734 800.5h1M20 823.5h1M90 823.5h1M125 823.5h1M160 823.5h1M195 823.5h1M230 823.5h1M265 823.5h1M300 823.5h1M335 823.5h1M370 823.5h1M405 823.5h1M440 823.5h1M475 823.5h1M510 823.5h1M545 823.5h1M580 823.5h1M615 823.5h1M650 823.5h1M685 823.5h1M720 823.5h1M755 823.5h1M790 823.5h1M825 823.5h1M859 823.5h1M894 823.5h1M929 823.5h1M964 823.5h1M999 823.5h1M1034 823.5h1M1069 823.5h1M1104 823.5h1M1139 823.5h1M1174 823.5h1M1209 823.5h1M1244 823.5h1M1279 823.5h1M1314 823.5h1M1349 823.5h1M1384 823.5h1M1419 823.5h1M1454 823.5h1M1489 823.5h1M1524 823.5h1M1559 823.5h1M1594 823.5h1M1629 823.5h1M1664 823.5h1M1699 823.5h1M1734 823.5h1M20 847.5h1M90 847.5h1M125 847.5h1M160 847.5h1M195 847.5h1M230 847.5h1M265 847.5h1M300 847.5h1M335 847.5h1M370 847.5h1M405 847.5h1M440 847.5h1M475 847.5h1M510 847.5h1M545 847.5h1M580 847.5h1M615 847.5h1M650 847.5h1M685 847.5h1M720 847.5h1M755 847.5h1M790 847.5h1M825 847.5h1M859 847.5h1M894 847.5h1M929 847.5h1M964 847.5h1M999 847.5h1M1034 847.5h1M1069 847.5h1M1104 847.5h1M1139 847.5h1M1174 847.5h1M1209 847.5h1M1244 847.5h1M1279 847.5h1M1314 847.5h1M1349 847.5h1M1384 847.5h1M1419 847.5h1M1454 847.5h1M1489 847.5h1M1524 847.5h1M1559 847.5h1M1594 847.5h1M1629 847.5h1M1664 847.5h1M1699 847.5h1M1734 847.5h1M20 870.5h1M90 870.5h1M125 870.5h1M160 870.5h1M195 870.5h1M230 870.5h1M265 870.5h1M300 870.5h1M335 870.5h1M370 870.5h1M405 870.5h1M440 870.5h1M475 870.5h1M510 870.5h1M545 870.5h1M580 870.5h1M615 870.5h1M650 870.5h1M685 870.5h1M720 870.5h1M755 870.5h1M790 870.5h1M825 870.5h1M859 870.5h1M894 870.5h1M929 870.5h1M964 870.5h1M999 870.5h1M1034 870.5h1M1069 870.5h1M1104 870.5h1M1139 870.5h1M1174 870.5h1M1209 870.5h1M1244 870.5h1M1279 870.5h1M1314 870.5h1M1349 870.5h1M1384 870.5h1M1419 870.5h1M1454 870.5h1M1489 870.5h1M1524 870.5h1M1559 870.5h1M1594 870.5h1M1629 870.5h1M1664 870.5h1M1699 870.5h1M1734 870.5h1M20 893.5h1M90 893.5h1M125 893.5h1M160 893.5h1M195 893.5h1M230 893.5h1M265 893.5h1M300 893.5h1M335 893.5h1M370 893.5h1M405 893.5h1M440 893.5h1M475 893.5h1M510 893.5h1M545 893.5h1M580 893.5h1M615 893.5h1M650 893.5h1M685 893.5h1M720 893.5h1M755 893.5h1M790 893.5h1M825 893.5h1M859 893.5h1M894 893.5h1M929 893.5h1M964 893.5h1M999 893.5h1M1034 893.5h1M1069 893.5h1M1104 893.5h1M1139 893.5h1M1174 893.5h1M1209 893.5h1M1244 893.5h1M1279 893.5h1M1314 893.5h1M1349 893.5h1M1384 893.5h1M1419 893.5h1M1454 893.5h1M1489 893.5h1M1524 893.5h1M1559 893.5h1M1594 893.5h1M1629 893.5h1M1664 893.5h1M1699 893.5h1M1734 893.5h1M20 916.5h1M90 916.5h1M125 916.5h1M160 916.5h1M195 916.5h1M230 916.5h1M265 916.5h1M300 916.5h1M335 916.5h1M370 916.5h1M405 916.5h1M440 916.5h1M475 916.5h1M510 916.5h1M545 916.5h1M580 916.5h1M615 916.5h1M650 916.5h1M685 916.5h1M720 916.5h1M755 916.5h1M790 916.5h1M825 916.5h1M859 916.5h1M894 916.5h1M929 916.5h1M964 916.5h1M999 916.5h1M1034 916.5h1M1069 916.5h1M1104 916.5h1M1139 916.5h1M1174 916.5h1M1209 916.5h1M1244 916.5h1M1279 916.5h1M1314 916.5h1M1349 916.5h1M1384 916.5h1M1419 916.5h1M1454 916.5h1M1489 916.5h1M1524 916.5h1M1559 916.5h1M1594 916.5h1M1629 916.5h1M1664 916.5h1M1699 916.5h1M1734 916.5h1M20 940.5h1M90 940.5h1M125 940.5h1M160 940.5h1M195 940.5h1M230 940.5h1M265 940.5h1M300 940.5h1M335 940.5h1M370 940.5h1M405 940.5h1M440 940.5h1M475 940.5h1M510 940.5h1M545 940.5h1M580 940.5h1M615 940.5h1M650 940.5h1M685 940.5h1M720 940.5h1M755 940.5h1M790 940.5h1M825 940.5h1M859 940.5h1M894 940.5h1M929 940.5h1M964 940.5h1M999 940.5h1M1034 940.5h1M1069 940.5h1M1104 940.5h1M1139 940.5h1M1174 940.5h1M1209 940.5h1M1244 940.5h1M1279 940.5h1M1314 940.5h1M1349 940.5h1M1384 940.5h1M1419 940.5h1M1454 940.5h1M1489 940.5h1M1524 940.5h1M1559 940.5h1M1594 940.5h1M1629 940.5h1M1664 940.5h1M1699 940.5h1M1734 940.5h1M20 986.5h1M90 986.5h1M125 986.5h1M160 986.5h1M195 986.5h1M230 986.5h1M265 986.5h1M300 986.5h1M335 986.5h1M370 986.5h1M405 986.5h1M440 986.5h1M475 986.5h1M510 986.5h1M545 986.5h1M580 986.5h1M615 986.5h1M650 986.5h1M685 986.5h1M720 986.5h1M755 986.5h1M790 986.5h1M825 986.5h1M859 986.5h1M894 986.5h1M929 986.5h1M964 986.5h1M999 986.5h1M1034 986.5h1M1069 986.5h1M1104 986.5h1M1139 986.5h1M1174 986.5h1M1209 986.5h1M1244 986.5h1M1279 986.5h1M1314 986.5h1M1349 986.5h1M1384 986.5h1M1419 986.5h1M1454 986.5h1M1489 986.5h1M1524 986.5h1M1559 986.5h1M1594 986.5h1M1629 986.5h1M1664 986.5h1M1699 986.5h1M1734 986.5h1M230 763.5h1M230 767.5h1M230 772.5h1M230 781.5h1M230 786.5h1M230 791.5h1M230 795.5h1M230 805.5h1M230 809.5h1M230 814.5h1M230 819.5h1M230 828.5h1M230 833.5h1M230 837.5h1M230 842.5h1M230 851.5h1M230 856.5h1M230 861.5h1M230 865.5h1M230 875.5h1M230 879.5h1M230 884.5h1M230 888.5h1M230 898.5h1M230 902.5h1M230 907.5h1M230 912.5h1M230 921.5h1M230 926.5h1M230 930.5h1M230 935.5h1M230 944.5h1M230 949.5h1M230 954.5h1M230 958.5h1M230 968.5h1M230 972.5h1M230 977.5h1M230 982.5h1M405 763.5h1M405 767.5h1M405 772.5h1M405 781.5h1M405 786.5h1M405 791.5h1M405 795.5h1M405 805.5h1M405 809.5h1M405 814.5h1M405 819.5h1M405 828.5h1M405 833.5h1M405 837.5h1M405 842.5h1M405 851.5h1M405 856.5h1M405 861.5h1M405 865.5h1M405 875.5h1M405 879.5h1M405 884.5h1M405 888.5h1M405 898.5h1M405 902.5h1M405 907.5h1M405 912.5h1M405 921.5h1M405 926.5h1M405 930.5h1M405 935.5h1M405 944.5h1M405 949.5h1M405 954.5h1M405 958.5h1M405 968.5h1M405 972.5h1M405 977.5h1M405 982.5h1M580 763.5h1M580 767.5h1M580 772.5h1M580 781.5h1M580 786.5h1M580 791.5h1M580 795.5h1M580 805.5h1M580 809.5h1M580 814.5h1M580 819.5h1M580 828.5h1M580 833.5h1M580 837.5h1M580 842.5h1M580 851.5h1M580 856.5h1M580 861.5h1M580 865.5h1M580 875.5h1M580 879.5h1M580 884.5h1M580 888.5h1M580 898.5h1M580 902.5h1M580 907.5h1M580 912.5h1M580 921.5h1M580 926.5h1M580 930.5h1M580 935.5h1M580 944.5h1M580 949.5h1M580 954.5h1M580 958.5h1M580 968.5h1M580 972.5h1M580 977.5h1M580 982.5h1M755 763.5h1M755 767.5h1M755 772.5h1M755 781.5h1M755 786.5h1M755 791.5h1M755 795.5h1M755 805.5h1M755 809.5h1M755 814.5h1M755 819.5h1M755 828.5h1M755 833.5h1M755 837.5h1M755 842.5h1M755 851.5h1M755 856.5h1M755 861.5h1M755 865.5h1M755 875.5h1M755 879.5h1M755 884.5h1M755 888.5h1M755 898.5h1M755 902.5h1M755 907.5h1M755 912.5h1M755 921.5h1M755 926.5h1M755 930.5h1M755 935.5h1M755 944.5h1M755 949.5h1M755 954.5h1M755 958.5h1M755 968.5h1M755 972.5h1M755 977.5h1M755 982.5h1M929 763.5h1M929 767.5h1M929 772.5h1M929 781.5h1M929 786.5h1M929 791.5h1M929 795.5h1M929 805.5h1M929 809.5h1M929 814.5h1M929 819.5h1M929 828.5h1M929 833.5h1M929 837.5h1M929 842.5h1M929 851.5h1M929 856.5h1M929 861.5h1M929 865.5h1M929 875.5h1M929 879.5h1M929 884.5h1M929 888.5h1M929 898.5h1M929 902.5h1M929 907.5h1M929 912.5h1M929 921.5h1M929 926.5h1M929 930.5h1M929 935.5h1M929 944.5h1M929 949.5h1M929 954.5h1M929 958.5h1M929 968.5h1M929 972.5h1M929 977.5h1M929 982.5h1M1104 763.5h1M1104 767.5h1M1104 772.5h1M1104 781.5h1M1104 786.5h1M1104 791.5h1M1104 795.5h1M1104 805.5h1M1104 809.5h1M1104 814.5h1M1104 819.5h1M1104 828.5h1M1104 833.5h1M1104 837.5h1M1104 842.5h1M1104 851.5h1M1104 856.5h1M1104 861.5h1M1104 865.5h1M1104 875.5h1M1104 879.5h1M1104 884.5h1M1104 888.5h1M1104 898.5h1M1104 902.5h1M1104 907.5h1M1104 912.5h1M1104 921.5h1M1104 926.5h1M1104 930.5h1M1104 935.5h1M1104 944.5h1M1104 949.5h1M1104 954.5h1M1104 958.5h1M1104 968.5h1M1104 972.5h1M1104 977.5h1M1104 982.5h1M1279 763.5h1M1279 767.5h1M1279 772.5h1M1279 781.5h1M1279 786.5h1M1279 791.5h1M1279 795.5h1M1279 805.5h1M1279 809.5h1M1279 814.5h1M1279 819.5h1M1279 828.5h1M1279 833.5h1M1279 837.5h1M1279 842.5h1M1279 851.5h1M1279 856.5h1M1279 861.5h1M1279 865.5h1M1279 875.5h1M1279 879.5h1M1279 884.5h1M1279 888.5h1M1279 898.5h1M1279 902.5h1M1279 907.5h1M1279 912.5h1M1279 921.5h1M1279 926.5h1M1279 930.5h1M1279 935.5h1M1279 944.5h1M1279 949.5h1M1279 954.5h1M1279 958.5h1M1279 968.5h1M1279 972.5h1M1279 977.5h1M1279 982.5h1M1454 763.5h1M1454 767.5h1M1454 772.5h1M1454 781.5h1M1454 786.5h1M1454 791.5h1M1454 795.5h1M1454 805.5h1M1454 809.5h1M1454 814.5h1M1454 819.5h1M1454 828.5h1M1454 833.5h1M1454 837.5h1M1454 842.5h1M1454 851.5h1M1454 856.5h1M1454 861.5h1M1454 865.5h1M1454 875.5h1M1454 879.5h1M1454 884.5h1M1454 888.5h1M1454 898.5h1M1454 902.5h1M1454 907.5h1M1454 912.5h1M1454 921.5h1M1454 926.5h1M1454 930.5h1M1454 935.5h1M1454 944.5h1M1454 949.5h1M1454 954.5h1M1454 958.5h1M1454 968.5h1M1454 972.5h1M1454 977.5h1M1454 982.5h1M1629 763.5h1M1629 767.5h1M1629 772.5h1M1629 781.5h1M1629 786.5h1M1629 791.5h1M1629 795.5h1M1629 805.5h1M1629 809.5h1M1629 814.5h1M1629 819.5h1M1629 828.5h1M1629 833.5h1M1629 837.5h1M1629 842.5h1M1629 851.5h1M1629 856.5h1M1629 861.5h1M1629 865.5h1M1629 875.5h1M1629 879.5h1M1629 884.5h1M1629 888.5h1M1629 898.5h1M1629 902.5h1M1629 907.5h1M1629 912.5h1M1629 921.5h1M1629 926.5h1M1629 930.5h1M1629 935.5h1M1629 944.5h1M1629 949.5h1M1629 954.5h1M1629 958.5h1M1629 968.5h1M1629 972.5h1M1629 977.5h1M1629 982.5h1" stroke="#bdbdbd" stroke-width="1" fill="none" shape-rendering="crispEdges"/><rect x="3" y="290" width="1748" height="2" fill="#707070"/><rect x="3" y="524" width="1748" height="2" fill="#707070"/><rect x="3" y="758" width="1748" height="2" fill="#707070"/><rect x="1715" y="74" width="36" height="17" fill="#000"/><rect x="1715" y="96" width="36" height="17" fill="#000"/><rect x="1715" y="120" width="36" height="17" fill="#000"/><rect x="1715" y="144" width="36" height="17" fill="#000"/><rect x="1715" y="166" width="36" height="17" fill="#000"/><rect x="1715" y="190" width="36" height="17" fill="#000"/><rect x="1715" y="212" width="36" height="17" fill="#000"/><rect x="1722" y="236" width="29" height="17" fill="#000"/><rect x="1722" y="260" width="29" height="17" fill="#000"/><rect x="1722" y="308" width="29" height="17" fill="#000"/><rect x="1695" y="330" width="56" height="17" fill="#000"/><rect x="1695" y="354" width="56" height="17" fill="#000"/><rect x="1695" y="378" width="56" height="17" fill="#000"/><rect x="1695" y="400" width="56" height="17" fill="#000"/><rect x="1722" y="424" width="29" height="17" fill="#000"/><rect x="1691" y="446" width="60" height="17" fill="#000"/><rect x="1691" y="470" width="60" height="17" fill="#000"/><rect x="1691" y="494" width="60" height="17" fill="#000"/><rect x="1677" y="542" width="74" height="17" fill="#000"/><rect x="1677" y="564" width="74" height="17" fill="#000"/><rect x="1677" y="588" width="74" height="17" fill="#000"/><rect x="1677" y="612" width="74" height="17" fill="#000"/><rect x="1677" y="634" width="74" height="17" fill="#000"/><rect x="1677" y="658" width="74" height="17" fill="#000"/><rect x="1677" y="680" width="74" height="17" fill="#000"/><rect x="1685" y="704" width="66" height="17" fill="#000"/><rect x="1723" y="728" width="28" height="17" fill="#000"/><rect x="1666" y="770" width="85" height="17" fill="#000"/><rect x="1666" y="792" width="85" height="17" fill="#000"/><rect x="1666" y="816" width="85" height="17" fill="#000"/><rect x="1666" y="840" width="85" height="17" fill="#000"/><rect x="1666" y="862" width="85" height="17" fill="#000"/><rect x="1666" y="886" width="85" height="17" fill="#000"/><rect x="1666" y="908" width="85" height="17" fill="#000"/><rect x="1680" y="932" width="71" height="17" fill="#000"/><rect x="1722" y="956" width="29" height="17" fill="#000"/><path d="M3 267.5H8M13 267.5H18M23 267.5H28M33 267.5H38M43 267.5H48M53 267.5H58M63 267.5H68M73 267.5H78M83 267.5H88M93 267.5H98M103 267.5H108M113 267.5H118M123 267.5H128M133 267.5H138M143 267.5H148M153 267.5H158M163 267.5H168M173 267.5H178M183 267.5H188M193 267.5H198M203 267.5H208M213 267.5H218M223 267.5H228M233 267.5H238M243 267.5H248M253 267.5H258M263 267.5H268M273 267.5H278M283 267.5H288M293 267.5H298M303 267.5H308M313 267.5H318M323 267.5H328M333 267.5H338M343 267.5H348M353 267.5H358M363 267.5H368M373 267.5H378M383 267.5H388M393 267.5H398M403 267.5H408M413 267.5H418M423 267.5H428M433 267.5H438M443 267.5H448M453 267.5H458M463 267.5H468M473 267.5H478M483 267.5H488M493 267.5H498M503 267.5H508M513 267.5H518M523 267.5H528M533 267.5H538M543 267.5H548M553 267.5H558M563 267.5H568M573 267.5H578M583 267.5H588M593 267.5H598M603 267.5H608M613 267.5H618M623 267.5H628M633 267.5H638M643 267.5H648M653 267.5H658M663 267.5H668M673 267.5H678M683 267.5H688M693 267.5H698M703 267.5H708M713 267.5H718M723 267.5H728M733 267.5H738M743 267.5H748M753 267.5H758M763 267.5H768M773 267.5H778M783 267.5H788M793 267.5H798M803 267.5H808M813 267.5H818M823 267.5H828M833 267.5H838M843 267.5H848M853 267.5H858M863 267.5H868M873 267.5H878M883 267.5H888M893 267.5H898M903 267.5H908M913 267.5H918M923 267.5H928M933 267.5H938M943 267.5H948M953 267.5H958M963 267.5H968M973 267.5H978M983 267.5H988M993 267.5H998M1003 267.5H1008M1013 267.5H1018M1023 267.5H1028M1033 267.5H1038M1043 267.5H1048M1053 267.5H1058M1063 267.5H1068M1073 267.5H1078M1083 267.5H1088M1093 267.5H1098M1103 267.5H1108M1113 267.5H1118M1123 267.5H1128M1133 267.5H1138M1143 267.5H1148M1153 267.5H1158M1163 267.5H1168M1173 267.5H1178M1183 267.5H1188M1193 267.5H1198M1203 267.5H1208M1213 267.5H1218M1223 267.5H1228M1233 267.5H1238M1243 267.5H1248M1253 267.5H1258M1263 267.5H1268M1273 267.5H1278M1283 267.5H1288M1293 267.5H1298M1303 267.5H1308M1313 267.5H1318M1323 267.5H1328M1333 267.5H1338M1343 267.5H1348M1353 267.5H1358M1363 267.5H1368M1373 267.5H1378M1383 267.5H1388M1393 267.5H1398M1403 267.5H1408M1413 267.5H1418M1423 267.5H1428M1433 267.5H1438M1443 267.5H1448M1453 267.5H1458M1463 267.5H1468M1473 267.5H1478M1483 267.5H1488M1493 267.5H1498M1503 267.5H1508M1513 267.5H1518M1523 267.5H1528M1533 267.5H1538M1543 267.5H1548M1553 267.5H1558M1563 267.5H1568M1573 267.5H1578M1583 267.5H1588M1593 267.5H1598M1603 267.5H1608M1613 267.5H1618M1623 267.5H1628M1633 267.5H1638M1643 267.5H1648M1653 267.5H1658M1663 267.5H1668M1673 267.5H1678M1683 267.5H1688M1693 267.5H1698M1703 267.5H1708M1713 267.5H1718" stroke="#c6c6c6" stroke-width="1" fill="none" shape-rendering="crispEdges"/><path d="M3 431.5H8M13 431.5H18M23 431.5H28M33 431.5H38M43 431.5H48M53 431.5H58M63 431.5H68M73 431.5H78M83 431.5H88M93 431.5H98M103 431.5H108M113 431.5H118M123 431.5H128M133 431.5H138M143 431.5H148M153 431.5H158M163 431.5H168M173 431.5H178M183 431.5H188M193 431.5H198M203 431.5H208M213 431.5H218M223 431.5H228M233 431.5H238M243 431.5H248M253 431.5H258M263 431.5H268M273 431.5H278M283 431.5H288M293 431.5H298M303 431.5H308M313 431.5H318M323 431.5H328M333 431.5H338M343 431.5H348M353 431.5H358M363 431.5H368M373 431.5H378M383 431.5H388M393 431.5H398M403 431.5H408M413 431.5H418M423 431.5H428M433 431.5H438M443 431.5H448M453 431.5H458M463 431.5H468M473 431.5H478M483 431.5H488M493 431.5H498M503 431.5H508M513 431.5H518M523 431.5H528M533 431.5H538M543 431.5H548M553 431.5H558M563 431.5H568M573 431.5H578M583 431.5H588M593 431.5H598M603 431.5H608M613 431.5H618M623 431.5H628M633 431.5H638M643 431.5H648M653 431.5H658M663 431.5H668M673 431.5H678M683 431.5H688M693 431.5H698M703 431.5H708M713 431.5H718M723 431.5H728M733 431.5H738M743 431.5H748M753 431.5H758M763 431.5H768M773 431.5H778M783 431.5H788M793 431.5H798M803 431.5H808M813 431.5H818M823 431.5H828M833 431.5H838M843 431.5H848M853 431.5H858M863 431.5H868M873 431.5H878M883 431.5H888M893 431.5H898M903 431.5H908M913 431.5H918M923 431.5H928M933 431.5H938M943 431.5H948M953 431.5H958M963 431.5H968M973 431.5H978M983 431.5H988M993 431.5H998M1003 431.5H1008M1013 431.5H1018M1023 431.5H1028M1033 431.5H1038M1043 431.5H1048M1053 431.5H1058M1063 431.5H1068M1073 431.5H1078M1083 431.5H1088M1093 431.5H1098M1103 431.5H1108M1113 431.5H1118M1123 431.5H1128M1133 431.5H1138M1143 431.5H1148M1153 431.5H1158M1163 431.5H1168M1173 431.5H1178M1183 431.5H1188M1193 431.5H1198M1203 431.5H1208M1213 431.5H1218M1223 431.5H1228M1233 431.5H1238M1243 431.5H1248M1253 431.5H1258M1263 431.5H1268M1273 431.5H1278M1283 431.5H1288M1293 431.5H1298M1303 431.5H1308M1313 431.5H1318M1323 431.5H1328M1333 431.5H1338M1343 431.5H1348M1353 431.5H1358M1363 431.5H1368M1373 431.5H1378M1383 431.5H1388M1393 431.5H1398M1403 431.5H1408M1413 431.5H1418M1423 431.5H1428M1433 431.5H1438M1443 431.5H1448M1453 431.5H1458M1463 431.5H1468M1473 431.5H1478M1483 431.5H1488M1493 431.5H1498M1503 431.5H1508M1513 431.5H1518M1523 431.5H1528M1533 431.5H1538M1543 431.5H1548M1553 431.5H1558M1563 431.5H1568M1573 431.5H1578M1583 431.5H1588M1593 431.5H1598M1603 431.5H1608M1613 431.5H1618M1623 431.5H1628M1633 431.5H1638M1643 431.5H1648M1653 431.5H1658M1663 431.5H1668M1673 431.5H1678M1683 431.5H1688M1693 431.5H1698M1703 431.5H1708M1713 431.5H1718" stroke="#c6c6c6" stroke-width="1" fill="none" shape-rendering="crispEdges"/><path d="M3 735.5H8M13 735.5H18M23 735.5H28M33 735.5H38M43 735.5H48M53 735.5H58M63 735.5H68M73 735.5H78M83 735.5H88M93 735.5H98M103 735.5H108M113 735.5H118M123 735.5H128M133 735.5H138M143 735.5H148M153 735.5H158M163 735.5H168M173 735.5H178M183 735.5H188M193 735.5H198M203 735.5H208M213 735.5H218M223 735.5H228M233 735.5H238M243 735.5H248M253 735.5H258M263 735.5H268M273 735.5H278M283 735.5H288M293 735.5H298M303 735.5H308M313 735.5H318M323 735.5H328M333 735.5H338M343 735.5H348M353 735.5H358M363 735.5H368M373 735.5H378M383 735.5H388M393 735.5H398M403 735.5H408M413 735.5H418M423 735.5H428M433 735.5H438M443 735.5H448M453 735.5H458M463 735.5H468M473 735.5H478M483 735.5H488M493 735.5H498M503 735.5H508M513 735.5H518M523 735.5H528M533 735.5H538M543 735.5H548M553 735.5H558M563 735.5H568M573 735.5H578M583 735.5H588M593 735.5H598M603 735.5H608M613 735.5H618M623 735.5H628M633 735.5H638M643 735.5H648M653 735.5H658M663 735.5H668M673 735.5H678M683 735.5H688M693 735.5H698M703 735.5H708M713 735.5H718M723 735.5H728M733 735.5H738M743 735.5H748M753 735.5H758M763 735.5H768M773 735.5H778M783 735.5H788M793 735.5H798M803 735.5H808M813 735.5H818M823 735.5H828M833 735.5H838M843 735.5H848M853 735.5H858M863 735.5H868M873 735.5H878M883 735.5H888M893 735.5H898M903 735.5H908M913 735.5H918M923 735.5H928M933 735.5H938M943 735.5H948M953 735.5H958M963 735.5H968M973 735.5H978M983 735.5H988M993 735.5H998M1003 735.5H1008M1013 735.5H1018M1023 735.5H1028M1033 735.5H1038M1043 735.5H1048M1053 735.5H1058M1063 735.5H1068M1073 735.5H1078M1083 735.5H1088M1093 735.5H1098M1103 735.5H1108M1113 735.5H1118M1123 735.5H1128M1133 735.5H1138M1143 735.5H1148M1153 735.5H1158M1163 735.5H1168M1173 735.5H1178M1183 735.5H1188M1193 735.5H1198M1203 735.5H1208M1213 735.5H1218M1223 735.5H1228M1233 735.5H1238M1243 735.5H1248M1253 735.5H1258M1263 735.5H1268M1273 735.5H1278M1283 735.5H1288M1293 735.5H1298M1303 735.5H1308M1313 735.5H1318M1323 735.5H1328M1333 735.5H1338M1343 735.5H1348M1353 735.5H1358M1363 735.5H1368M1373 735.5H1378M1383 735.5H1388M1393 735.5H1398M1403 735.5H1408M1413 735.5H1418M1423 735.5H1428M1433 735.5H1438M1443 735.5H1448M1453 735.5H1458M1463 735.5H1468M1473 735.5H1478M1483 735.5H1488M1493 735.5H1498M1503 735.5H1508M1513 735.5H1518M1523 735.5H1528M1533 735.5H1538M1543 735.5H1548M1553 735.5H1558M1563 735.5H1568M1573 735.5H1578M1583 735.5H1588M1593 735.5H1598M1603 735.5H1608M1613 735.5H1618M1623 735.5H1628M1633 735.5H1638M1643 735.5H1648M1653 735.5H1658M1663 735.5H1668M1673 735.5H1678M1683 735.5H1688M1693 735.5H1698M1703 735.5H1708M1713 735.5H1718" stroke="#c6c6c6" stroke-width="1" fill="none" shape-rendering="crispEdges"/><path d="M3 963.5H8M13 963.5H18M23 963.5H28M33 963.5H38M43 963.5H48M53 963.5H58M63 963.5H68M73 963.5H78M83 963.5H88M93 963.5H98M103 963.5H108M113 963.5H118M123 963.5H128M133 963.5H138M143 963.5H148M153 963.5H158M163 963.5H168M173 963.5H178M183 963.5H188M193 963.5H198M203 963.5H208M213 963.5H218M223 963.5H228M233 963.5H238M243 963.5H248M253 963.5H258M263 963.5H268M273 963.5H278M283 963.5H288M293 963.5H298M303 963.5H308M313 963.5H318M323 963.5H328M333 963.5H338M343 963.5H348M353 963.5H358M363 963.5H368M373 963.5H378M383 963.5H388M393 963.5H398M403 963.5H408M413 963.5H418M423 963.5H428M433 963.5H438M443 963.5H448M453 963.5H458M463 963.5H468M473 963.5H478M483 963.5H488M493 963.5H498M503 963.5H508M513 963.5H518M523 963.5H528M533 963.5H538M543 963.5H548M553 963.5H558M563 963.5H568M573 963.5H578M583 963.5H588M593 963.5H598M603 963.5H608M613 963.5H618M623 963.5H628M633 963.5H638M643 963.5H648M653 963.5H658M663 963.5H668M673 963.5H678M683 963.5H688M693 963.5H698M703 963.5H708M713 963.5H718M723 963.5H728M733 963.5H738M743 963.5H748M753 963.5H758M763 963.5H768M773 963.5H778M783 963.5H788M793 963.5H798M803 963.5H808M813 963.5H818M823 963.5H828M833 963.5H838M843 963.5H848M853 963.5H858M863 963.5H868M873 963.5H878M883 963.5H888M893 963.5H898M903 963.5H908M913 963.5H918M923 963.5H928M933 963.5H938M943 963.5H948M953 963.5H958M963 963.5H968M973 963.5H978M983 963.5H988M993 963.5H998M1003 963.5H1008M1013 963.5H1018M1023 963.5H1028M1033 963.5H1038M1043 963.5H1048M1053 963.5H1058M1063 963.5H1068M1073 963.5H1078M1083 963.5H1088M1093 963.5H1098M1103 963.5H1108M1113 963.5H1118M1123 963.5H1128M1133 963.5H1138M1143 963.5H1148M1153 963.5H1158M1163 963.5H1168M1173 963.5H1178M1183 963.5H1188M1193 963.5H1198M1203 963.5H1208M1213 963.5H1218M1223 963.5H1228M1233 963.5H1238M1243 963.5H1248M1253 963.5H1258M1263 963.5H1268M1273 963.5H1278M1283 963.5H1288M1293 963.5H1298M1303 963.5H1308M1313 963.5H1318M1323 963.5H1328M1333 963.5H1338M1343 963.5H1348M1353 963.5H1358M1363 963.5H1368M1373 963.5H1378M1383 963.5H1388M1393 963.5H1398M1403 963.5H1408M1413 963.5H1418M1423 963.5H1428M1433 963.5H1438M1443 963.5H1448M1453 963.5H1458M1463 963.5H1468M1473 963.5H1478M1483 963.5H1488M1493 963.5H1498M1503 963.5H1508M1513 963.5H1518M1523 963.5H1528M1533 963.5H1538M1543 963.5H1548M1553 963.5H1558M1563 963.5H1568M1573 963.5H1578M1583 963.5H1588M1593 963.5H1598M1603 963.5H1608M1613 963.5H1618M1623 963.5H1628M1633 963.5H1638M1643 963.5H1648M1653 963.5H1658M1663 963.5H1668M1673 963.5H1678M1683 963.5H1688M1693 963.5H1698M1703 963.5H1708M1713 963.5H1718" stroke="#c6c6c6" stroke-width="1" fill="none" shape-rendering="crispEdges"/><path d="M55.5 96V100M55.5 105V110M55.5 115V120M55.5 125V130M55.5 135V140M55.5 145V150M55.5 155V160M55.5 165V170M55.5 175V180M55.5 185V190M55.5 195V200M55.5 205V210M55.5 215V220M55.5 225V230M55.5 235V240M55.5 245V250M55.5 255V260M55.5 265V270M55.5 275V280M55.5 285V290M55.5 295V300M55.5 305V310M55.5 315V320M55.5 325V330M55.5 335V340M55.5 345V350M55.5 355V360M55.5 365V370M55.5 375V380M55.5 385V390M55.5 395V400M55.5 405V410M55.5 415V420M55.5 425V430M55.5 435V440M55.5 445V450M55.5 455V460M55.5 465V470M55.5 475V480M55.5 485V490M55.5 495V500M55.5 505V510M55.5 515V520M55.5 525V530M55.5 535V540M55.5 545V550M55.5 555V560M55.5 565V570M55.5 575V580M55.5 585V590M55.5 595V600M55.5 605V610M55.5 615V620M55.5 625V630M55.5 635V640M55.5 645V650M55.5 655V660M55.5 665V670M55.5 675V680M55.5 685V690M55.5 695V700M55.5 705V710M55.5 715V720M55.5 725V730M55.5 735V740M55.5 745V750M55.5 755V760M55.5 765V770M55.5 775V780M55.5 785V790M55.5 795V800M55.5 805V810M55.5 815V820M55.5 825V830M55.5 835V840M55.5 845V850M55.5 855V860M55.5 865V870M55.5 875V880M55.5 885V890M55.5 895V900M55.5 905V910M55.5 915V920M55.5 925V930M55.5 935V940M55.5 945V950M55.5 955V960M55.5 965V970M55.5 975V980M55.5 985V990" stroke="#c6c6c6" stroke-width="1" fill="none" shape-rendering="crispEdges"/><path d="M3.5 963.5H74.5V962.5H75.5V963.5H83.5V966.5H86.5V965.5H87.5V964.5H96.5V963.5H97.5V964.5H106.5V963.5H109.5V964.5H117.5V963.5H120.5V964.5H122.5V963.5H135.5V964.5H136.5V963.5H138.5V962.5H144.5V963.5H145.5V962.5H147.5V963.5H151.5V962.5H154.5V963.5H159.5V962.5H165.5V963.5H167.5V962.5H183.5V963.5H184.5V962.5H205.5V961.5H206.5V960.5H208.5V959.5H212.5V958.5H213.5V957.5H214.5V956.5H215.5V955.5H219.5V954.5H220.5V952.5H221.5V951.5H222.5V950.5H225.5V949.5H226.5V948.5H227.5V947.5H230.5V946.5H233.5V945.5H235.5V944.5H236.5V943.5H237.5V942.5H240.5V941.5H241.5V940.5H246.5V939.5H247.5V938.5H250.5V937.5H252.5V936.5H253.5V935.5H255.5V934.5H256.5V933.5H260.5V932.5H261.5V931.5H263.5V930.5H264.5V931.5H265.5V930.5H266.5V929.5H267.5V928.5H270.5V927.5H275.5V926.5H276.5V925.5H278.5V924.5H280.5V923.5H283.5V924.5H284.5V923.5H286.5V922.5H287.5V921.5H288.5V920.5H293.5V919.5H295.5V918.5H297.5V917.5H299.5V916.5H301.5V915.5H302.5V916.5H303.5V915.5H305.5V914.5H307.5V913.5H309.5V912.5H313.5V911.5H314.5V910.5H316.5V909.5H318.5V908.5H322.5V907.5H324.5V906.5H326.5V905.5H328.5V904.5H330.5V903.5H332.5V902.5H334.5V901.5H340.5V900.5H344.5V899.5H345.5V898.5H349.5V897.5H352.5V896.5H353.5V895.5H362.5V894.5H363.5V893.5H365.5V892.5H370.5V891.5H373.5V890.5H375.5V889.5H378.5V888.5H379.5V887.5H383.5V886.5H384.5V887.5H386.5V886.5H388.5V885.5H391.5V884.5H396.5V883.5H397.5V882.5H400.5V881.5H404.5V880.5H405.5V879.5H407.5V880.5H408.5V879.5H410.5V878.5H412.5V877.5H414.5V876.5H415.5V875.5H416.5V876.5H418.5V875.5H419.5V874.5H423.5V873.5H424.5V872.5H428.5V871.5H430.5V870.5H431.5V869.5H433.5V870.5H435.5V869.5H437.5V868.5H439.5V867.5H441.5V866.5H443.5V865.5H445.5V864.5H449.5V863.5H452.5V862.5H454.5V861.5H456.5V860.5H459.5V859.5H461.5V858.5H464.5V857.5H466.5V856.5H473.5V855.5H475.5V854.5H480.5V853.5H482.5V852.5H483.5V851.5H484.5V850.5H486.5V851.5H491.5V850.5H495.5V849.5H501.5V848.5H504.5V846.5H506.5V845.5H509.5V844.5H510.5V843.5H511.5V844.5H512.5V843.5H513.5V842.5H515.5V841.5H518.5V839.5H519.5V838.5H521.5V837.5H526.5V836.5H527.5V835.5H529.5V834.5H530.5V835.5H531.5V834.5H533.5V833.5H536.5V832.5H537.5V831.5H540.5V832.5H541.5V833.5H543.5V834.5H544.5V832.5H547.5V833.5H548.5V834.5H549.5V833.5H550.5V832.5H552.5V831.5H553.5V830.5H554.5V828.5H555.5V827.5H557.5V828.5H558.5V829.5H559.5V828.5H561.5V827.5H562.5V825.5H564.5V826.5H566.5V825.5H567.5V824.5H570.5V823.5H571.5V822.5H572.5V821.5H575.5V820.5H576.5V821.5H578.5V820.5H583.5V819.5H584.5V818.5H585.5V817.5H586.5V816.5H587.5V817.5H588.5V816.5H590.5V815.5H591.5V816.5H592.5V815.5H593.5V816.5H594.5V815.5H596.5V814.5H601.5V813.5H602.5V812.5H603.5V811.5H604.5V812.5H606.5V813.5H607.5V811.5H608.5V812.5H609.5V811.5H610.5V812.5H612.5V811.5H613.5V810.5H615.5V811.5H616.5V812.5H617.5V813.5H618.5V812.5H619.5V811.5H620.5V809.5H621.5V810.5H626.5V811.5H627.5V810.5H631.5V809.5H632.5V810.5H633.5V811.5H634.5V810.5H635.5V809.5H636.5V808.5H637.5V809.5H638.5V810.5H640.5V811.5H643.5V810.5H644.5V809.5H646.5V810.5H649.5V811.5H653.5V810.5H654.5V811.5H655.5V812.5H657.5V811.5H659.5V810.5H661.5V809.5H663.5V811.5H664.5V812.5H669.5V811.5H671.5V810.5H672.5V811.5H674.5V809.5H676.5V808.5H677.5V810.5H681.5V809.5H683.5V808.5H684.5V809.5H685.5V808.5H690.5V807.5H693.5V806.5H694.5V807.5H695.5V806.5H696.5V807.5H698.5V806.5H699.5V805.5H702.5V803.5H705.5V804.5H707.5V803.5H708.5V802.5H709.5V804.5H710.5V803.5H711.5V802.5H712.5V801.5H715.5V800.5H716.5V801.5H720.5V800.5H723.5V801.5H724.5V800.5H725.5V799.5H729.5V798.5H730.5V797.5H731.5V796.5H733.5V797.5H734.5V796.5H737.5V795.5H747.5V794.5H751.5V793.5H754.5V792.5H755.5V791.5H756.5V790.5H758.5V791.5H760.5V790.5H761.5V789.5H762.5V788.5H765.5V787.5H768.5V786.5H769.5V787.5H770.5V788.5H771.5V787.5H773.5V788.5H777.5V786.5H779.5V787.5H781.5V790.5H782.5V789.5H785.5V788.5H786.5V789.5H789.5V790.5H790.5V789.5H791.5V788.5H793.5V787.5H795.5V788.5H799.5V786.5H801.5V787.5H803.5V790.5H805.5V791.5H806.5V790.5H807.5V791.5H809.5V792.5H810.5V794.5H811.5V792.5H812.5V794.5H813.5V792.5H816.5V791.5H818.5V792.5H821.5V795.5H823.5V796.5H825.5V794.5H827.5V793.5H830.5V792.5H833.5V791.5H834.5V792.5H835.5V793.5H836.5V792.5H837.5V791.5H838.5V792.5H839.5V790.5H840.5V791.5H841.5V792.5H845.5V791.5H849.5V793.5H850.5V794.5H852.5V795.5H853.5V794.5H854.5V793.5H856.5V792.5H857.5V793.5H858.5V794.5H859.5V793.5H861.5V792.5H864.5V793.5H865.5V794.5H869.5V793.5H870.5V792.5H871.5V791.5H873.5V792.5H874.5V793.5H876.5V792.5H878.5V791.5H879.5V792.5H881.5V791.5H882.5V790.5H884.5V792.5H887.5V791.5H888.5V790.5H889.5V791.5H890.5V792.5H891.5V791.5H892.5V793.5H894.5V794.5H896.5V793.5H897.5V794.5H898.5V793.5H903.5V792.5H908.5V790.5H909.5V789.5H910.5V790.5H912.5V791.5H914.5V790.5H915.5V789.5H917.5V787.5H918.5V786.5H919.5V785.5H920.5V784.5H921.5V786.5H922.5V785.5H923.5V786.5H925.5V785.5H926.5V786.5H927.5V785.5H928.5V786.5H929.5V787.5H930.5V786.5H931.5V787.5H932.5V786.5H933.5V787.5H934.5V788.5H935.5V789.5H936.5V791.5H937.5V790.5H940.5V788.5H942.5V789.5H943.5V790.5H944.5V789.5H945.5V791.5H946.5V789.5H948.5V790.5H949.5V789.5H952.5V788.5H954.5V787.5H955.5V786.5H956.5V787.5H957.5V788.5H958.5V790.5H960.5V792.5H961.5V791.5H962.5V793.5H963.5V792.5H965.5V793.5H966.5V791.5H970.5V792.5H975.5V793.5H976.5V792.5H977.5V789.5H978.5V787.5H979.5V785.5H980.5V784.5H981.5V785.5H984.5V784.5H985.5V785.5H988.5V787.5H989.5V785.5H991.5V786.5H993.5V785.5H994.5V786.5H996.5V787.5H999.5V786.5H1000.5V787.5H1001.5V788.5H1002.5V786.5H1003.5V787.5H1004.5V785.5H1005.5V784.5H1006.5V783.5H1007.5V782.5H1008.5V783.5H1009.5V784.5H1010.5V785.5H1011.5V786.5H1012.5V785.5H1014.5V786.5H1015.5V787.5H1018.5V785.5H1019.5V784.5H1020.5V785.5H1022.5V786.5H1023.5V785.5H1025.5V787.5H1026.5V788.5H1027.5V789.5H1028.5V790.5H1031.5V791.5H1032.5V792.5H1036.5V791.5H1037.5V792.5H1038.5V793.5H1039.5V792.5H1040.5V791.5H1041.5V792.5H1042.5V790.5H1043.5V792.5H1045.5V800.5H1046.5V850.5H1047.5V900.5H1048.5V905.5H1049.5V910.5H1050.5V916.5H1051.5V920.5H1052.5V924.5H1053.5V927.5H1054.5V930.5H1055.5V933.5H1056.5V935.5H1057.5V938.5H1058.5V940.5H1059.5V942.5H1060.5V944.5H1061.5V946.5H1062.5V947.5H1063.5V948.5H1064.5V949.5H1065.5V950.5H1066.5V951.5H1068.5V952.5H1070.5V953.5H1072.5V954.5H1074.5V955.5H1076.5V956.5H1079.5V957.5H1082.5V958.5H1086.5V959.5H1091.5V960.5H1097.5V961.5H1109.5V962.5H1111.5V961.5H1112.5V962.5H1125.5V961.5H1127.5V962.5H1146.5V961.5H1148.5V962.5H1158.5V961.5H1160.5V962.5H1185.5V961.5H1186.5V962.5H1201.5V961.5H1202.5V962.5H1228.5V961.5H1230.5V962.5H1240.5V961.5H1243.5V962.5H1247.5V961.5H1248.5V962.5H1257.5V961.5H1259.5V962.5H1260.5V961.5H1261.5V962.5H1285.5V961.5H1287.5V962.5H1301.5V961.5H1371.5V962.5H1382.5V961.5H1383.5V962.5H1408.5V961.5H1416.5V962.5H1425.5V961.5H1426.5V962.5H1437.5V961.5H1438.5V962.5H1457.5V961.5H1460.5V962.5H1464.5V961.5H1466.5V962.5H1472.5V961.5H1480.5V962.5H1487.5V961.5H1488.5V964.5H1489.5V963.5H1490.5V965.5H1491.5V964.5H1492.5V965.5H1493.5V963.5H1494.5V964.5H1495.5V963.5H1496.5V965.5H1497.5V962.5H1498.5V965.5H1499.5V963.5H1500.5V964.5H1501.5V961.5H1513.5V960.5H1537.5V963.5H1538.5V962.5H1539.5V964.5H1540.5V963.5H1541.5V964.5H1542.5V962.5H1543.5V963.5H1544.5V962.5H1545.5V964.5H1546.5V961.5H1547.5V964.5H1548.5V960.5H1585.5V963.5H1586.5V961.5H1587.5V964.5H1588.5V963.5H1589.5V964.5H1590.5V961.5H1591.5V963.5H1592.5V961.5H1593.5V964.5H1594.5V960.5H1607.5V959.5H1638.5V962.5H1639.5V961.5H1640.5V963.5H1641.5V962.5H1642.5V963.5H1643.5V961.5H1644.5V962.5H1645.5V961.5H1646.5V963.5H1647.5V959.5H1682.5V962.5H1683.5V960.5H1684.5V963.5H1685.5V962.5H1686.5V963.5H1687.5V960.5H1688.5V962.5H1689.5V960.5H1690.5V962.5H1691.5V959.5H1700.5V958.5H1750.5" stroke="#7b2f96" fill="none" stroke-width="1" stroke-linecap="square" stroke-linejoin="miter" shape-rendering="crispEdges"/><path d="M83.5 960V967M84.5 960V967M85.5 962V967M86.5 962V966M1488.5 958V965M1489.5 960V964M1490.5 958V966M1491.5 957V965M1492.5 958V966M1493.5 960V964M1494.5 958V965M1495.5 960V964M1496.5 957V966M1497.5 960V963M1498.5 957V966M1499.5 960V964M1500.5 957V965M1537.5 957V964M1538.5 959V963M1539.5 957V965M1540.5 957V964M1541.5 957V965M1542.5 959V963M1543.5 957V964M1544.5 959V963M1545.5 957V965M1546.5 959V962M1547.5 957V965M1585.5 957V964M1586.5 958V962M1587.5 957V965M1588.5 956V964M1589.5 956V965M1590.5 958V962M1591.5 956V964M1592.5 959V962M1593.5 956V965M1594.5 959V961M1638.5 956V963M1639.5 958V962M1640.5 956V964M1641.5 956V963M1642.5 956V964M1643.5 958V962M1644.5 956V963M1645.5 958V962M1646.5 956V964M1682.5 956V963M1683.5 957V961M1684.5 956V964M1685.5 955V963M1686.5 955V964M1687.5 957V961M1688.5 955V963M1689.5 958V961M1690.5 955V963" stroke="#7b2f96" fill="none" stroke-width="1" shape-rendering="crispEdges"/><path d="M3.5 735.5H59.5V734.5H62.5V733.5H66.5V732.5H70.5V731.5H73.5V730.5H77.5V729.5H81.5V728.5H84.5V727.5H88.5V726.5H92.5V725.5H95.5V724.5H99.5V723.5H103.5V722.5H107.5V721.5H110.5V720.5H114.5V719.5H118.5V718.5H122.5V717.5H126.5V716.5H129.5V715.5H133.5V714.5H137.5V713.5H141.5V712.5H145.5V711.5H149.5V710.5H152.5V709.5H156.5V708.5H160.5V707.5H164.5V706.5H168.5V705.5H172.5V704.5H176.5V703.5H180.5V702.5H184.5V701.5H188.5V700.5H192.5V699.5H196.5V698.5H200.5V697.5H204.5V696.5H208.5V695.5H212.5V694.5H216.5V693.5H220.5V692.5H224.5V691.5H228.5V690.5H232.5V689.5H236.5V688.5H240.5V687.5H244.5V686.5H249.5V685.5H253.5V684.5H257.5V683.5H261.5V682.5H265.5V681.5H270.5V680.5H274.5V679.5H278.5V678.5H282.5V677.5H287.5V676.5H291.5V675.5H295.5V674.5H300.5V673.5H304.5V672.5H308.5V671.5H313.5V670.5H317.5V669.5H321.5V668.5H326.5V667.5H330.5V666.5H335.5V665.5H339.5V664.5H344.5V663.5H348.5V662.5H353.5V661.5H357.5V660.5H362.5V659.5H367.5V658.5H371.5V657.5H376.5V656.5H380.5V655.5H385.5V654.5H390.5V653.5H394.5V652.5H399.5V651.5H404.5V650.5H409.5V649.5H414.5V648.5H418.5V647.5H423.5V646.5H428.5V645.5H433.5V644.5H438.5V643.5H443.5V642.5H448.5V641.5H453.5V640.5H458.5V639.5H463.5V638.5H468.5V637.5H473.5V636.5H478.5V635.5H483.5V634.5H489.5V633.5H494.5V632.5H499.5V631.5H504.5V630.5H510.5V629.5H515.5V628.5H520.5V627.5H526.5V626.5H531.5V625.5H537.5V624.5H542.5V623.5H548.5V622.5H553.5V621.5H559.5V620.5H565.5V619.5H570.5V618.5H576.5V617.5H582.5V616.5H588.5V615.5H594.5V614.5H600.5V613.5H606.5V612.5H612.5V611.5H618.5V610.5H624.5V609.5H630.5V608.5H636.5V607.5H642.5V606.5H649.5V605.5H655.5V604.5H662.5V603.5H668.5V602.5H675.5V601.5H681.5V600.5H688.5V599.5H695.5V598.5H702.5V597.5H708.5V596.5H715.5V595.5H723.5V594.5H730.5V593.5H737.5V592.5H744.5V591.5H752.5V590.5H759.5V589.5H767.5V588.5H774.5V587.5H782.5V586.5H790.5V585.5H798.5V584.5H806.5V583.5H814.5V582.5H823.5V581.5H831.5V580.5H840.5V579.5H848.5V578.5H857.5V577.5H866.5V576.5H876.5V575.5H885.5V574.5H895.5V573.5H905.5V572.5H915.5V571.5H925.5V570.5H935.5V569.5H946.5V568.5H957.5V567.5H969.5V566.5H980.5V565.5H992.5V564.5H1005.5V563.5H1018.5V562.5H1031.5V561.5H1045.5V560.5H1060.5V559.5H1076.5V558.5H1092.5V557.5H1109.5V556.5H1128.5V555.5H1148.5V554.5H1169.5V553.5H1194.5V552.5H1222.5V551.5H1257.5V550.5H1306.5V549.5H1468.5V550.5H1520.5V551.5H1556.5V552.5H1587.5V553.5H1614.5V554.5H1638.5V555.5H1660.5V556.5H1681.5V557.5H1701.5V558.5H1719.5V559.5H1737.5V560.5H1750.5" stroke="#f6921e" fill="none" stroke-width="1" stroke-linecap="square" stroke-linejoin="miter" shape-rendering="crispEdges"/><path d="M3.5 429.5H144.5V428.5H145.5V429.5H211.5V428.5H213.5V427.5H216.5V426.5H218.5V425.5H219.5V424.5H221.5V423.5H223.5V422.5H225.5V421.5H226.5V420.5H228.5V419.5H231.5V418.5H232.5V417.5H234.5V416.5H236.5V415.5H238.5V414.5H239.5V413.5H241.5V412.5H243.5V411.5H245.5V410.5H247.5V409.5H249.5V408.5H250.5V407.5H252.5V406.5H254.5V405.5H256.5V404.5H257.5V403.5H259.5V402.5H261.5V401.5H263.5V400.5H266.5V399.5H275.5V398.5H287.5V399.5H341.5V400.5H433.5V401.5H530.5V400.5H553.5V399.5H561.5V400.5H581.5V399.5H599.5V400.5H641.5V401.5H678.5V400.5H689.5V401.5H693.5V402.5H699.5V403.5H705.5V404.5H711.5V405.5H928.5V404.5H933.5V405.5H960.5V404.5H971.5V405.5H978.5V404.5H979.5V405.5H1005.5V404.5H1006.5V405.5H1013.5V404.5H1016.5V405.5H1024.5V404.5H1032.5V405.5H1044.5V404.5H1045.5V400.5H1046.5V398.5H1047.5V396.5H1051.5V397.5H1052.5V398.5H1054.5V399.5H1055.5V400.5H1057.5V401.5H1058.5V402.5H1059.5V403.5H1060.5V404.5H1062.5V405.5H1063.5V406.5H1065.5V407.5H1066.5V408.5H1068.5V409.5H1069.5V410.5H1071.5V411.5H1072.5V412.5H1074.5V413.5H1076.5V414.5H1078.5V415.5H1080.5V416.5H1082.5V417.5H1084.5V418.5H1087.5V419.5H1089.5V420.5H1092.5V421.5H1094.5V422.5H1098.5V423.5H1103.5V424.5H1108.5V425.5H1114.5V426.5H1123.5V427.5H1135.5V428.5H1153.5V429.5H1750.5" stroke="#8cc63a" fill="none" stroke-width="1" stroke-linecap="square" stroke-linejoin="miter" shape-rendering="crispEdges"/><path d="M3.5 265.5H55.5V270.5H56.5V266.5H57.5V265.5H59.5V264.5H61.5V265.5H66.5V264.5H67.5V265.5H71.5V264.5H72.5V265.5H73.5V266.5H75.5V265.5H79.5V266.5H81.5V265.5H82.5V268.5H83.5V264.5H84.5V258.5H85.5V256.5H86.5V255.5H87.5V254.5H88.5V253.5H90.5V252.5H91.5V251.5H92.5V250.5H93.5V249.5H95.5V248.5H96.5V247.5H98.5V246.5H99.5V245.5H100.5V244.5H102.5V243.5H103.5V242.5H105.5V241.5H106.5V240.5H107.5V239.5H109.5V238.5H110.5V237.5H112.5V236.5H113.5V235.5H116.5V234.5H118.5V233.5H120.5V232.5H123.5V231.5H125.5V230.5H128.5V229.5H131.5V228.5H135.5V227.5H138.5V226.5H142.5V225.5H146.5V224.5H152.5V223.5H156.5V222.5H162.5V221.5H169.5V220.5H177.5V219.5H187.5V218.5H206.5V219.5H208.5V220.5H209.5V221.5H211.5V222.5H212.5V223.5H214.5V224.5H216.5V225.5H218.5V226.5H220.5V227.5H226.5V228.5H234.5V229.5H240.5V230.5H244.5V231.5H248.5V232.5H252.5V233.5H256.5V234.5H260.5V235.5H266.5V236.5H273.5V237.5H277.5V236.5H279.5V237.5H282.5V236.5H283.5V237.5H284.5V236.5H286.5V237.5H294.5V236.5H295.5V237.5H296.5V236.5H297.5V237.5H302.5V236.5H303.5V237.5H305.5V236.5H306.5V237.5H311.5V238.5H312.5V237.5H314.5V236.5H318.5V237.5H319.5V238.5H320.5V237.5H321.5V236.5H322.5V237.5H338.5V236.5H340.5V237.5H344.5V238.5H345.5V237.5H348.5V235.5H349.5V236.5H350.5V237.5H356.5V236.5H358.5V237.5H361.5V236.5H364.5V237.5H367.5V236.5H368.5V237.5H369.5V236.5H371.5V237.5H373.5V236.5H374.5V235.5H375.5V234.5H378.5V235.5H380.5V234.5H382.5V235.5H383.5V236.5H384.5V235.5H385.5V236.5H388.5V235.5H391.5V236.5H395.5V235.5H396.5V236.5H401.5V237.5H402.5V238.5H404.5V237.5H409.5V236.5H411.5V237.5H414.5V236.5H417.5V237.5H421.5V236.5H424.5V237.5H426.5V236.5H427.5V237.5H428.5V236.5H431.5V237.5H433.5V238.5H435.5V237.5H436.5V238.5H438.5V237.5H440.5V238.5H441.5V237.5H444.5V236.5H445.5V237.5H447.5V238.5H450.5V237.5H453.5V238.5H455.5V237.5H459.5V238.5H462.5V237.5H464.5V238.5H467.5V237.5H469.5V238.5H470.5V237.5H475.5V238.5H479.5V237.5H481.5V236.5H483.5V237.5H488.5V236.5H489.5V237.5H490.5V238.5H491.5V237.5H492.5V236.5H495.5V237.5H500.5V236.5H506.5V237.5H507.5V236.5H509.5V235.5H511.5V236.5H512.5V235.5H531.5V234.5H532.5V233.5H533.5V234.5H534.5V235.5H535.5V234.5H541.5V233.5H542.5V230.5H543.5V229.5H546.5V230.5H547.5V231.5H548.5V232.5H549.5V230.5H550.5V229.5H551.5V230.5H553.5V231.5H555.5V232.5H556.5V231.5H558.5V229.5H560.5V230.5H563.5V231.5H564.5V232.5H568.5V231.5H572.5V232.5H573.5V231.5H574.5V230.5H575.5V231.5H577.5V230.5H578.5V231.5H579.5V232.5H582.5V231.5H583.5V230.5H584.5V232.5H585.5V231.5H586.5V230.5H587.5V231.5H588.5V232.5H590.5V231.5H592.5V232.5H593.5V231.5H596.5V230.5H598.5V232.5H599.5V231.5H600.5V229.5H601.5V230.5H602.5V232.5H604.5V233.5H605.5V232.5H606.5V231.5H607.5V232.5H609.5V233.5H610.5V231.5H611.5V230.5H614.5V231.5H615.5V232.5H616.5V231.5H618.5V232.5H620.5V231.5H622.5V232.5H624.5V233.5H625.5V232.5H631.5V231.5H635.5V232.5H637.5V231.5H639.5V230.5H640.5V232.5H642.5V231.5H643.5V230.5H645.5V229.5H646.5V230.5H647.5V232.5H648.5V231.5H649.5V230.5H650.5V229.5H651.5V231.5H654.5V232.5H656.5V230.5H657.5V229.5H661.5V228.5H662.5V229.5H663.5V230.5H665.5V231.5H667.5V230.5H668.5V229.5H669.5V230.5H673.5V232.5H675.5V231.5H676.5V230.5H677.5V231.5H681.5V230.5H682.5V229.5H683.5V230.5H684.5V232.5H685.5V231.5H688.5V230.5H689.5V231.5H690.5V232.5H691.5V234.5H692.5V233.5H693.5V232.5H694.5V233.5H695.5V235.5H697.5V234.5H705.5V235.5H706.5V236.5H707.5V235.5H709.5V234.5H710.5V235.5H711.5V236.5H714.5V235.5H717.5V234.5H719.5V235.5H721.5V236.5H722.5V235.5H725.5V236.5H727.5V235.5H729.5V234.5H730.5V235.5H733.5V234.5H734.5V235.5H736.5V237.5H737.5V236.5H739.5V235.5H741.5V236.5H743.5V237.5H744.5V236.5H745.5V238.5H746.5V236.5H748.5V235.5H749.5V237.5H751.5V236.5H758.5V237.5H759.5V238.5H760.5V239.5H761.5V240.5H762.5V241.5H763.5V242.5H764.5V241.5H765.5V242.5H766.5V241.5H767.5V240.5H768.5V239.5H769.5V241.5H771.5V242.5H772.5V240.5H776.5V241.5H777.5V242.5H778.5V241.5H779.5V240.5H781.5V242.5H784.5V241.5H785.5V242.5H788.5V240.5H789.5V241.5H790.5V243.5H791.5V242.5H792.5V241.5H793.5V239.5H794.5V240.5H798.5V241.5H799.5V242.5H800.5V241.5H801.5V242.5H805.5V241.5H808.5V239.5H812.5V238.5H813.5V239.5H819.5V238.5H820.5V237.5H822.5V238.5H824.5V237.5H825.5V239.5H828.5V240.5H829.5V241.5H831.5V240.5H834.5V241.5H836.5V240.5H838.5V239.5H839.5V240.5H841.5V239.5H842.5V237.5H843.5V239.5H844.5V237.5H847.5V239.5H848.5V237.5H849.5V238.5H851.5V239.5H853.5V240.5H856.5V238.5H859.5V237.5H860.5V236.5H861.5V237.5H862.5V238.5H863.5V237.5H865.5V236.5H866.5V237.5H868.5V238.5H869.5V239.5H870.5V241.5H871.5V240.5H873.5V239.5H874.5V238.5H877.5V239.5H882.5V240.5H884.5V241.5H885.5V240.5H886.5V241.5H887.5V240.5H890.5V239.5H894.5V237.5H895.5V238.5H896.5V236.5H897.5V237.5H898.5V236.5H899.5V238.5H901.5V239.5H904.5V237.5H905.5V239.5H906.5V238.5H907.5V237.5H908.5V236.5H910.5V237.5H911.5V236.5H912.5V237.5H913.5V238.5H917.5V239.5H918.5V238.5H920.5V240.5H921.5V241.5H922.5V240.5H923.5V239.5H924.5V240.5H925.5V238.5H930.5V239.5H932.5V238.5H933.5V239.5H934.5V238.5H935.5V239.5H936.5V237.5H937.5V239.5H938.5V240.5H942.5V241.5H943.5V242.5H944.5V241.5H946.5V240.5H947.5V241.5H949.5V239.5H951.5V238.5H952.5V237.5H953.5V235.5H954.5V234.5H956.5V235.5H958.5V236.5H959.5V239.5H963.5V241.5H964.5V240.5H965.5V239.5H967.5V240.5H968.5V239.5H969.5V237.5H970.5V238.5H971.5V239.5H972.5V238.5H973.5V237.5H975.5V238.5H976.5V240.5H977.5V243.5H978.5V246.5H979.5V249.5H981.5V248.5H982.5V249.5H983.5V248.5H985.5V246.5H987.5V245.5H988.5V244.5H990.5V242.5H991.5V244.5H993.5V243.5H994.5V244.5H995.5V245.5H996.5V246.5H998.5V247.5H999.5V248.5H1001.5V247.5H1002.5V246.5H1003.5V247.5H1004.5V246.5H1007.5V247.5H1008.5V248.5H1010.5V250.5H1011.5V249.5H1012.5V248.5H1014.5V247.5H1015.5V246.5H1016.5V244.5H1017.5V242.5H1018.5V241.5H1019.5V240.5H1020.5V239.5H1021.5V240.5H1022.5V238.5H1023.5V239.5H1025.5V240.5H1026.5V239.5H1027.5V238.5H1028.5V239.5H1030.5V240.5H1032.5V239.5H1033.5V240.5H1035.5V239.5H1037.5V238.5H1039.5V239.5H1040.5V240.5H1043.5V242.5H1045.5V204.5H1046.5V150.5H1047.5V118.5H1048.5V114.5H1049.5V117.5H1050.5V118.5H1051.5V120.5H1052.5V122.5H1053.5V124.5H1054.5V126.5H1055.5V128.5H1056.5V131.5H1057.5V133.5H1058.5V136.5H1059.5V139.5H1060.5V142.5H1061.5V145.5H1062.5V148.5H1063.5V151.5H1064.5V154.5H1065.5V157.5H1066.5V160.5H1067.5V164.5H1068.5V167.5H1069.5V170.5H1070.5V174.5H1071.5V178.5H1072.5V182.5H1073.5V185.5H1074.5V188.5H1075.5V192.5H1076.5V195.5H1077.5V198.5H1078.5V201.5H1079.5V204.5H1080.5V207.5H1081.5V210.5H1082.5V212.5H1083.5V215.5H1084.5V218.5H1085.5V220.5H1086.5V222.5H1087.5V224.5H1088.5V226.5H1089.5V228.5H1090.5V230.5H1091.5V232.5H1092.5V233.5H1093.5V234.5H1094.5V236.5H1095.5V237.5H1096.5V238.5H1097.5V239.5H1098.5V240.5H1099.5V241.5H1100.5V242.5H1101.5V243.5H1103.5V244.5H1104.5V245.5H1106.5V246.5H1107.5V247.5H1109.5V248.5H1111.5V249.5H1112.5V250.5H1114.5V251.5H1116.5V252.5H1117.5V253.5H1119.5V254.5H1121.5V255.5H1123.5V256.5H1126.5V257.5H1130.5V258.5H1205.5V259.5H1210.5V260.5H1216.5V261.5H1232.5V260.5H1243.5V259.5H1268.5V258.5H1287.5V259.5H1291.5V260.5H1296.5V261.5H1300.5V262.5H1313.5V261.5H1325.5V260.5H1355.5V259.5H1371.5V255.5H1373.5V256.5H1374.5V257.5H1379.5V258.5H1384.5V259.5H1385.5V260.5H1398.5V259.5H1407.5V258.5H1484.5V259.5H1487.5V258.5H1488.5V260.5H1489.5V261.5H1496.5V257.5H1499.5V256.5H1502.5V255.5H1503.5V256.5H1504.5V257.5H1506.5V258.5H1507.5V257.5H1508.5V258.5H1510.5V259.5H1512.5V260.5H1513.5V262.5H1521.5V263.5H1522.5V262.5H1523.5V263.5H1524.5V262.5H1534.5V263.5H1535.5V262.5H1536.5V261.5H1537.5V262.5H1540.5V261.5H1541.5V262.5H1542.5V258.5H1543.5V257.5H1547.5V255.5H1548.5V256.5H1549.5V257.5H1553.5V258.5H1556.5V261.5H1585.5V262.5H1588.5V261.5H1589.5V262.5H1590.5V258.5H1591.5V257.5H1595.5V255.5H1596.5V256.5H1597.5V257.5H1601.5V258.5H1603.5V259.5H1604.5V261.5H1612.5V262.5H1613.5V261.5H1614.5V262.5H1615.5V261.5H1625.5V262.5H1626.5V261.5H1627.5V262.5H1628.5V261.5H1639.5V262.5H1642.5V261.5H1643.5V262.5H1644.5V258.5H1645.5V257.5H1648.5V256.5H1650.5V257.5H1651.5V258.5H1652.5V257.5H1653.5V258.5H1655.5V259.5H1656.5V262.5H1682.5V261.5H1683.5V262.5H1686.5V261.5H1687.5V262.5H1688.5V258.5H1689.5V257.5H1692.5V256.5H1694.5V257.5H1695.5V258.5H1696.5V257.5H1697.5V258.5H1699.5V259.5H1700.5V262.5H1727.5V261.5H1730.5V260.5H1750.5" stroke="#f7ee1e" fill="none" stroke-width="1" stroke-linecap="square" stroke-linejoin="miter" shape-rendering="crispEdges"/><path d="M55.5 258V271M56.5 262V267M82.5 256V269M83.5 256V265M84.5 256V259M1488.5 251V261M1489.5 252V262M1490.5 248V262M1491.5 248V262M1492.5 249V262M1493.5 247V262M1494.5 249V262M1495.5 248V262M1496.5 248V258M1497.5 249V258M1498.5 247V258M1499.5 249V257M1500.5 248V257M1501.5 248V257M1502.5 254V256M1503.5 255V257M1504.5 255V258M1505.5 256V258M1506.5 256V259M1536.5 252V262M1537.5 254V263M1538.5 250V263M1539.5 250V263M1540.5 251V262M1541.5 249V263M1542.5 250V259M1543.5 250V258M1544.5 250V258M1545.5 251V258M1546.5 249V258M1547.5 254V256M1548.5 255V257M1549.5 255V258M1550.5 256V258M1551.5 256V258M1553.5 257V259M1584.5 253V262M1585.5 254V263M1586.5 250V263M1587.5 250V263M1588.5 251V262M1589.5 249V263M1590.5 251V259M1591.5 250V258M1592.5 250V258M1593.5 251V258M1594.5 249V258M1595.5 254V256M1596.5 255V257M1597.5 255V258M1598.5 256V258M1599.5 256V258M1601.5 257V259M1603.5 258V260M1638.5 253V262M1639.5 255V263M1640.5 251V263M1641.5 251V263M1642.5 251V262M1643.5 250V263M1644.5 251V259M1645.5 251V258M1646.5 251V258M1647.5 251V258M1648.5 254V257M1649.5 255V257M1650.5 256V258M1651.5 256V259M1682.5 253V262M1683.5 255V263M1684.5 251V263M1685.5 251V263M1686.5 252V262M1687.5 250V263M1688.5 251V259M1689.5 251V258M1690.5 251V258M1691.5 252V258M1692.5 254V257M1693.5 255V257M1694.5 256V258M1695.5 256V259M1739.5 259V261M1740.5 259V261M1741.5 259V261M1742.5 259V261M1743.5 259V261M1744.5 259V261M1745.5 259V261M1746.5 259V261M1747.5 259V261M1748.5 259V261M1749.5 259V261M1750.5 259V261" stroke="#f7ee1e" fill="none" stroke-width="1" shape-rendering="crispEdges"/><text x="1745.3" y="86" fill="#f3e92b" font-size="12" text-anchor="end">40 V</text><text x="1745.3" y="109" fill="#f3e92b" font-size="12" text-anchor="end">35 V</text><text x="1745.3" y="133" fill="#f3e92b" font-size="12" text-anchor="end">30 V</text><text x="1745.3" y="156" fill="#f3e92b" font-size="12" text-anchor="end">25 V</text><text x="1745.3" y="179" fill="#f3e92b" font-size="12" text-anchor="end">20 V</text><text x="1745.3" y="202" fill="#f3e92b" font-size="12" text-anchor="end">15 V</text><text x="1745.3" y="225" fill="#f3e92b" font-size="12" text-anchor="end">10 V</text><text x="1745.3" y="249" fill="#f3e92b" font-size="12" text-anchor="end">5 V</text><text x="1745.3" y="272" fill="#f3e92b" font-size="12" text-anchor="end">0 V</text><text x="1745.3" y="320" fill="#82bf35" font-size="12" text-anchor="end">1 V</text><text x="1745.3" y="343" fill="#82bf35" font-size="12" text-anchor="end">800 mV</text><text x="1745.3" y="367" fill="#82bf35" font-size="12" text-anchor="end">600 mV</text><text x="1745.3" y="390" fill="#82bf35" font-size="12" text-anchor="end">400 mV</text><text x="1745.3" y="413" fill="#82bf35" font-size="12" text-anchor="end">200 mV</text><text x="1745.3" y="436" fill="#82bf35" font-size="12" text-anchor="end">0 V</text><text x="1745.3" y="459" fill="#82bf35" font-size="12" text-anchor="end">-200 mV</text><text x="1745.3" y="483" fill="#82bf35" font-size="12" text-anchor="end">-400 mV</text><text x="1745.3" y="506" fill="#82bf35" font-size="12" text-anchor="end">-600 mV</text><text x="1745.3" y="554" fill="#f08a24" font-size="12" text-anchor="end">590.64 mT</text><text x="1745.3" y="577" fill="#f08a24" font-size="12" text-anchor="end">516.81 mT</text><text x="1745.3" y="601" fill="#f08a24" font-size="12" text-anchor="end">442.98 mT</text><text x="1745.3" y="624" fill="#f08a24" font-size="12" text-anchor="end">369.15 mT</text><text x="1745.3" y="647" fill="#f08a24" font-size="12" text-anchor="end">295.32 mT</text><text x="1745.3" y="670" fill="#f08a24" font-size="12" text-anchor="end">221.49 mT</text><text x="1745.3" y="693" fill="#f08a24" font-size="12" text-anchor="end">147.66 mT</text><text x="1745.3" y="717" fill="#f08a24" font-size="12" text-anchor="end">73.83 mT</text><text x="1745.3" y="740" fill="#f08a24" font-size="12" text-anchor="end">0 T</text><text x="1745.3" y="782" fill="#6f3388" font-size="12" text-anchor="end">5.215279 kA</text><text x="1745.3" y="805" fill="#6f3388" font-size="12" text-anchor="end">4.563369 kA</text><text x="1745.3" y="828" fill="#6f3388" font-size="12" text-anchor="end">3.911459 kA</text><text x="1745.3" y="852" fill="#6f3388" font-size="12" text-anchor="end">3.259549 kA</text><text x="1745.3" y="875" fill="#6f3388" font-size="12" text-anchor="end">2.607639 kA</text><text x="1745.3" y="898" fill="#6f3388" font-size="12" text-anchor="end">1.955730 kA</text><text x="1745.3" y="921" fill="#6f3388" font-size="12" text-anchor="end">1.303820 kA</text><text x="1745.3" y="945" fill="#6f3388" font-size="12" text-anchor="end">651.910 A</text><text x="1745.3" y="968" fill="#6f3388" font-size="12" text-anchor="end">0 A</text><text x="55.6" y="987.3" fill="#a9a9a9" font-size="12" text-anchor="middle">0 s</text><text x="230.5" y="987.3" fill="#a9a9a9" font-size="12" text-anchor="middle">4 ms</text><text x="405.4" y="987.3" fill="#a9a9a9" font-size="12" text-anchor="middle">8 ms</text><text x="580.3" y="987.3" fill="#a9a9a9" font-size="12" text-anchor="middle">12 ms</text><text x="755.2" y="987.3" fill="#a9a9a9" font-size="12" text-anchor="middle">16 ms</text><text x="930.1" y="987.3" fill="#a9a9a9" font-size="12" text-anchor="middle">20 ms</text><text x="1105.0" y="987.3" fill="#a9a9a9" font-size="12" text-anchor="middle">24 ms</text><text x="1279.8" y="987.3" fill="#a9a9a9" font-size="12" text-anchor="middle">28 ms</text><text x="1454.8" y="987.3" fill="#a9a9a9" font-size="12" text-anchor="middle">32 ms</text><text x="1629.7" y="987.3" fill="#a9a9a9" font-size="12" text-anchor="middle">36 ms</text><rect x="1727.6" y="82" width="7" height="6" fill="#000"/><path d="M1711 65.2H1742Q1744 65.2 1744 67.2V98Z" fill="#4f4f4f" stroke="#4f4f4f" stroke-width="1.5" stroke-linejoin="round"/><circle cx="1737.2" cy="71.4" r="4.1" fill="#484848" stroke="#a2a2a2" stroke-width="1.2"/><path d="M1733.6 75L1728 80.6" stroke="#a6a6a6" stroke-width="2.7" stroke-linecap="round"/><path d="M10 162H79L85 174.5L79 187H10Q7 187 7 184V165Q7 162 10 162Z" fill="#242110" stroke="#f3e92b" stroke-width="2" stroke-linejoin="round"/><path d="M33 162V187" stroke="#f3e92b" stroke-width="2"/><text x="20.5" y="177.7" fill="#f3e92b" font-size="11" text-anchor="middle">C 1</text><text x="57.0" y="177.7" fill="#f3e92b" font-size="11" text-anchor="middle">20 V</text><path d="M10 396H79L85 408.5L79 421H10Q7 421 7 418V399Q7 396 10 396Z" fill="#1a2210" stroke="#8cc63a" stroke-width="2" stroke-linejoin="round"/><path d="M33 396V421" stroke="#8cc63a" stroke-width="2"/><text x="20.5" y="411.7" fill="#8cc63a" font-size="11" text-anchor="middle">C 4</text><text x="57.0" y="411.7" fill="#8cc63a" font-size="11" text-anchor="middle">200 mV</text><path d="M9.5 722.5H30.0L42.0 735.0L30.0 747.5H9.5Q6.5 747.5 6.5 744.5V725.5Q6.5 722.5 9.5 722.5Z" fill="#24170a" stroke="#f08a24" stroke-width="1.3" stroke-linejoin="round"/><text x="23.55" y="739.2" fill="#f08a24" font-size="11.5" text-anchor="middle">M 1</text><path d="M10 951H30L42 963.0L30 975H10Q7 975 7 972V954Q7 951 10 951Z" fill="#7d2f99" stroke="#7d2f99" stroke-width="2" stroke-linejoin="round"/><text x="23.8" y="967.2" fill="#fff" font-size="12" text-anchor="middle">M 2</text><text x="101.5" y="179" fill="#f3e92b" font-size="18">U_loop,coil</text><text x="101.5" y="413" fill="#8cc63a" font-size="18">U_Photod</text><text x="51.2" y="740.2" fill="#f08a24" font-size="18">B_t</text><text x="52.6" y="967.6" fill="#7b2f96" font-size="18">I_p</text><path d="M45 58H66L55.5 68Z" fill="#f08a24"/><path d="M46 69H65V88H59.5L55.5 95L51.5 88H46Z" fill="#000" stroke="#f08a24" stroke-width="2" stroke-linejoin="miter"/><text x="55.5" y="84" fill="#f08a24" font-size="14" font-weight="bold" text-anchor="middle">T</text><path d="M593 36.5H586.5V53.5H593M1161 36.5H1167.5V53.5H1161" stroke="#e4e4e4" stroke-width="1" fill="none"/><path d="M587 45.2H1167" stroke="#a9a9a9" stroke-width="1.6" fill="none"/><path d="M596 33H611L603.5 38.5Z" fill="#f08a24"/><path d="M597 40.5H610V52.5H606L603.5 56.5L601 52.5H597Z" fill="#000" stroke="#f08a24" stroke-width="1.6" stroke-linejoin="round"/><text x="603.5" y="50.5" fill="#f08a24" font-size="10" font-weight="bold" text-anchor="middle">T</text><rect x="1759.9" y="501.6" width="4.1" height="4.5" rx="1.6" fill="#d0d0d0"/><rect x="1759.9" y="510.09999999999997" width="4.1" height="4.5" rx="1.6" fill="#d0d0d0"/><rect x="1759.9" y="518.5999999999999" width="4.1" height="4.5" rx="1.6" fill="#d0d0d0"/></svg></body></html>
